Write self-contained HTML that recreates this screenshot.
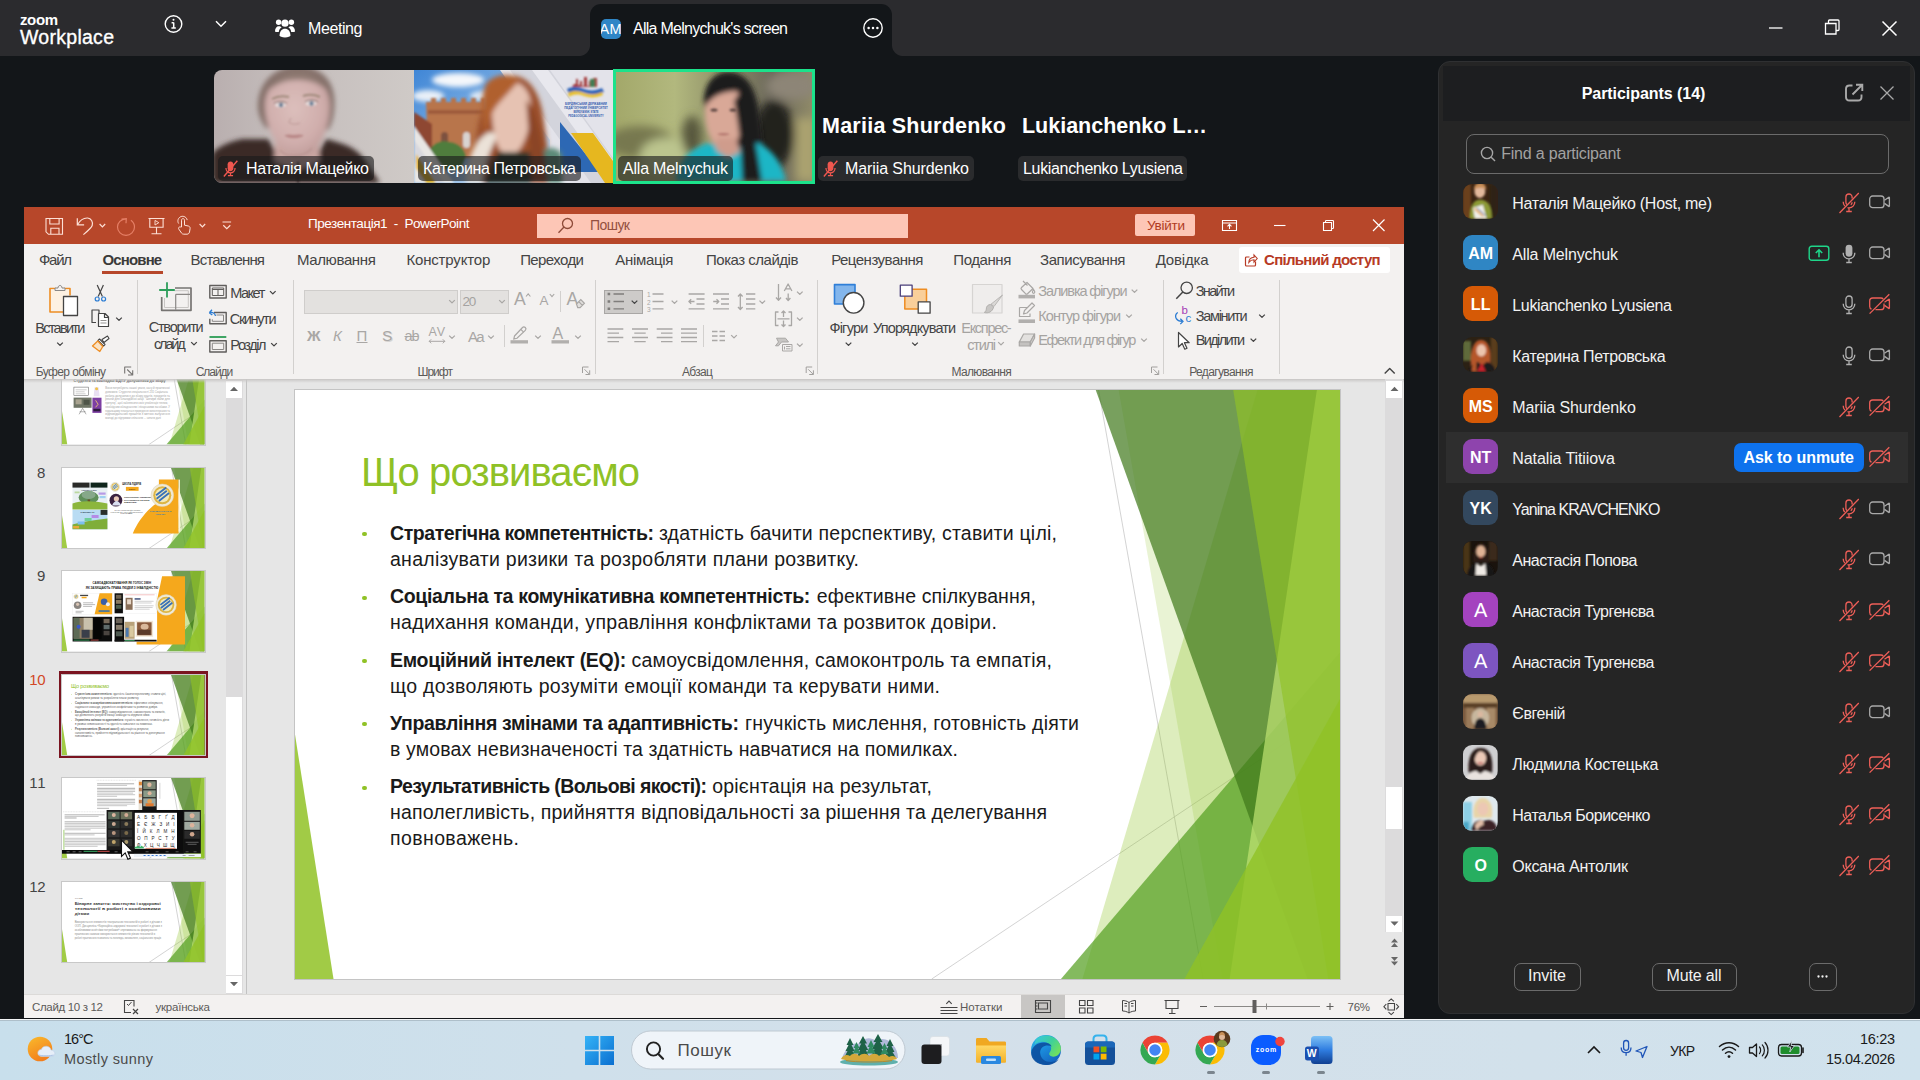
<!DOCTYPE html>
<html lang="uk">
<head>
<meta charset="utf-8">
<title>Zoom Workplace</title>
<style>
*{box-sizing:border-box;margin:0;padding:0}
html,body{width:1920px;height:1080px;overflow:hidden;background:#131619;font-family:"Liberation Sans","DejaVu Sans",sans-serif;}
.abs{position:absolute}
#zbar{position:absolute;left:0;top:0;width:1920px;height:56px;background:#2b2b2e;color:#fff}
#ztab{position:absolute;left:590px;top:4px;width:302px;height:52px;background:#131619;border-radius:11px 11px 0 0}
#ztab:before,#ztab:after{content:"";position:absolute;bottom:0;width:11px;height:11px;background:radial-gradient(circle at 0 0,#2b2b2e 10.5px,#131619 11.5px)}
#ztab:before{left:-11px}
#ztab:after{right:-11px;background:radial-gradient(circle at 100% 0,#2b2b2e 10.5px,#131619 11.5px)}
.t{position:absolute;white-space:pre;line-height:1}
/* video strip */
.tile{position:absolute;top:70px;width:200px;height:113px;overflow:hidden}
.nm{position:absolute;height:25px;border-radius:5px;background:rgba(26,26,28,.62);color:#fff;font-size:16px;line-height:25px;white-space:nowrap;padding:0 6px}
/* ppt */
#ppt{position:absolute;left:24px;top:207px;width:1380px;height:811px;background:#e6e6e6;overflow:hidden}
#ptitle{position:absolute;left:0;top:0;width:1380px;height:37px;background:#b7472a}
#ptabs{position:absolute;left:0;top:37px;width:1380px;height:35px;background:#f3f1f0}
#pribbon{position:absolute;left:0;top:72px;width:1380px;height:101px;background:#f3f1f0;border-bottom:1px solid #d8d6d4}
#pmain{position:absolute;left:0;top:172px;width:1380px;height:615px;overflow:hidden}
#pstatus{position:absolute;left:0;top:787px;width:1380px;height:24px;background:#f3f1f0;border-top:1px solid #dcdad8}
.sl{left:366px;font-size:19.500px;color:#1a1a1a}
/* participants */
#pp{position:absolute;left:1438px;top:61px;width:477px;height:953px;background:#252525;border-radius:12px;border:1px solid #2f3032;overflow:hidden}
#pphead{position:absolute;left:4px;top:4px;width:467px;height:55px;background:#1d1e20}
.row{position:absolute;left:9px;width:459px;height:51px;color:#fff}
.av{position:absolute;left:1463.300px;width:34.700px;height:34.700px;border-radius:9px;overflow:hidden}
.rn{position:absolute;left:65px;top:0;line-height:51px;font-size:16px;color:#f5f5f5;white-space:nowrap}
/* taskbar */
#tb{position:absolute;left:0;top:1020px;width:1920px;height:60px;background:linear-gradient(90deg,#c8dfec 0%,#cfe0eb 30%,#d4e0ea 55%,#d2e1eb 80%,#d0e2ed 100%)}
</style>
</head>
<body>
<!-- ZOOM TITLE BAR -->
<div id="zbar">
  <span class="t" style="letter-spacing:-0.391px;top:11.80px;left:20px;font-size:15px;font-weight:bold">zoom</span>
  <span class="t" style="letter-spacing:0.279px;top:27.99px;left:20px;font-size:19.5px;-webkit-text-stroke:.35px #fff">Workplace</span>
  <svg class="abs" style="left:163px;top:13px" width="22" height="22" viewBox="0 0 22 22" fill="none" stroke="#fff" stroke-width="1.4"><circle cx="10.5" cy="11" r="8.3"/><path d="M10.7 9.6v5.2M8.6 9.7h2.1M8.4 14.9h4.4" stroke-width="1.5"/><circle cx="10.5" cy="6.8" r="1" fill="#fff" stroke="none"/></svg>
  <svg class="abs" style="left:214px;top:19px" width="14" height="10" viewBox="0 0 14 10" fill="none" stroke="#fff" stroke-width="1.5"><path d="M2 2.2l5 5 5-5"/></svg>
  <svg class="abs" style="left:274px;top:17px" width="22" height="22" viewBox="0 0 22 22" fill="#fff"><circle cx="11" cy="6.2" r="3.6"/><circle cx="4.6" cy="5.2" r="2.7"/><circle cx="17.4" cy="5.2" r="2.7"/><path d="M1 14.2c0-3 1.6-5 3.8-5 1.2 0 2.1.5 2.8 1.4-1.6 1-2.6 2.4-2.8 4.4H2c-.6 0-1-.3-1-.8zM21 14.2c0-3-1.6-5-3.8-5-1.2 0-2.1.5-2.8 1.4 1.6 1 2.6 2.4 2.8 4.4H20c.6 0 1-.3 1-.8z"/><path d="M5.6 18.3c0-4 2.3-6.6 5.4-6.6s5.4 2.600 5.400 6.600c0 1.300-2.400 2.200-5.400 2.200s-5.400-.9-5.400-2.200z"/></svg>
  <span class="t" style="letter-spacing:-0.404px;top:20.76px;left:308px;font-size:16px">Meeting</span>
  <div id="ztab">
    <div class="abs" style="left:11px;top:15px;width:20px;height:20px;border-radius:5px;background:#2f86c6;overflow:hidden"><span class="t" style="letter-spacing:0.250px;top:2.93px;left:-1.500px;font-size:14.5px;color:#fff">AM</span></div>
    <span class="t" style="letter-spacing:-0.733px;top:16.76px;left:43px;font-size:16px">Alla Melnychuk's screen</span>
    <svg class="abs" style="left:272px;top:13px" width="22" height="22" viewBox="0 0 22 22" fill="none" stroke="#fff" stroke-width="1.400"><circle cx="11" cy="11" r="9.2"/><g fill="#fff" stroke="none"><circle cx="6.6" cy="11" r="1.25"/><circle cx="11" cy="11" r="1.25"/><circle cx="15.4" cy="11" r="1.25"/></g></svg>
  </div>
  <svg class="abs" style="left:1760px;top:14px" width="150" height="30" viewBox="0 0 150 30" fill="none" stroke="#fff" stroke-width="1.300"><path d="M9 14h13.500"/><path d="M65.500 9.500h10.500v10.500h-10.500zM68.500 9.500v-2.500c0-.6.400-1 1-1h8.500c.6 0 1 .4 1 1v8.500c0 .6-.4 1-1 1h-2.500"/><path d="M122.500 7.500l14 14M136.500 7.500l-14 14" stroke-width="1.500"/></svg>
</div>

<!-- VIDEO STRIP -->
<div id="strip">
<svg width="0" height="0" style="position:absolute"><defs>
  <filter id="b1" x="-20%" y="-20%" width="140%" height="140%"><feGaussianBlur stdDeviation="1.2"/></filter>
  <filter id="b2" x="-20%" y="-20%" width="140%" height="140%"><feGaussianBlur stdDeviation="2.600"/></filter>
  <filter id="b4" x="-30%" y="-30%" width="160%" height="160%"><feGaussianBlur stdDeviation="5"/></filter>
  <symbol id="micoff" viewBox="0 0 20 20"><path d="M10 2.600c-1.700 0-3 1.300-3 3v4.200c0 1.700 1.300 3 3 3s3-1.300 3-3V5.600c0-1.700-1.300-3-3-3z" fill="currentColor"/><path d="M5.200 9.600c0 2.800 2.100 4.900 4.800 4.900s4.800-2.100 4.800-4.900M10 14.600v2.600M7.300 17.400h5.400" fill="none" stroke="currentColor" stroke-width="1.300"/><path d="M17.200 1.800L3 18.400" stroke="currentColor" stroke-width="1.500"/></symbol>
</defs></svg>
<!-- tile 1 -->
<div class="tile" style="left:214px;border-radius:8px 0 0 8px">
<svg width="200" height="113" viewBox="0 0 200 113">
  <defs><linearGradient id="w1" x1="0" x2="1"><stop offset="0" stop-color="#b9afaf"/><stop offset=".3" stop-color="#c3bbba"/><stop offset="1" stop-color="#cfcac7"/></linearGradient>
  <radialGradient id="f1" cx=".45" cy=".4" r=".7"><stop offset="0" stop-color="#dcbfbc"/><stop offset=".6" stop-color="#d0aeac"/><stop offset="1" stop-color="#b99593"/></radialGradient></defs>
  <rect width="200" height="113" fill="url(#w1)"/>
  <g filter="url(#b2)">
    <path d="M44 40C42 14 60-4 84-4s40 16 36 46c-1 8-3 14-6 18L52 58c-4-5-7-11-8-18z" fill="#85716b"/>
    <path d="M-2 113V84c6-8 20-13 30-15l26 0 12 20 36-2 10-18c16 4 30 8 38 20l16 24z" fill="#3a2928"/>
    <path d="M62 66h42l2 26-22 8-24-8z" fill="#cba7a3"/>
    <path d="M51 36c0-18 12-30 33-30 20 0 32 12 32 30 0 16-6 32-13 42-7 10-20 12-29 6C61 76 51 54 51 36z" fill="url(#f1)"/>
    <path d="M56 20c6-12 16-17 28-17s22 5 27 16c-8-7-17-9-28-9s-20 3-27 10z" fill="#8f7a72"/>
  </g>
  <g filter="url(#b1)">
    <path d="M58 29c5-3 11-3.500 17-2M89 26c6-2 12-1.500 17 1" stroke="#a08a7c" stroke-width="2" fill="none"/>
    <ellipse cx="66.500" cy="35" rx="5.500" ry="2.400" fill="#e6dcdc"/><ellipse cx="97" cy="33.500" rx="5.500" ry="2.400" fill="#e6dcdc"/>
    <circle cx="67" cy="35" r="2.300" fill="#6b7f96"/><circle cx="97.500" cy="33.500" r="2.300" fill="#6b7f96"/>
    <path d="M60 33.500c4-2.500 9-2.500 13 0M91 32c4-2.500 9-2.500 13 0" stroke="#7b6660" stroke-width="1" fill="none"/>
    <path d="M77 48c-1 2-1.500 3-2 4.500 2 2 7 2.500 11 .5" stroke="#bd9a97" stroke-width="1.500" fill="none" opacity=".7"/>
    <path d="M71 65.500c3-1.800 6-1 8.500-.5 2.500-.5 6-1.300 9.500.5-3 3.500-14 4-18 0z" fill="#c0908f"/>
    <path d="M71 65.600c6 1.200 12 1.200 18 0" stroke="#a87574" stroke-width=".8" fill="none"/>
    <path d="M66 80c6 8 24 8 32-2" stroke="#b28e8c" stroke-width="2" fill="none" opacity=".6"/>
    <path d="M84 92v21" stroke="#241818" stroke-width="1.500"/>
  </g>
</svg>
<div class="nm" style="left:4px;top:86px;width:156px;padding:0"><svg class="abs" style="left:3px;top:3px;color:#f0574f" width="19" height="19"><use href="#micoff"/></svg><span class="t" style="letter-spacing:-0.318px;top:5.16px;left:28px;font-size:16px">Наталія Мацейко</span></div>
</div>
<!-- tile 2 -->
<div class="tile" style="left:414px;width:199px">
<svg width="199" height="113" viewBox="0 0 199 113">
  <defs><linearGradient id="sky" x1="0" y1="0" x2="1" y2="1"><stop offset="0" stop-color="#3f86d6"/><stop offset=".55" stop-color="#8db9e6"/><stop offset="1" stop-color="#dfe8f2"/></linearGradient></defs>
  <rect width="199" height="113" fill="#e3e3ea"/>
  <path d="M0 0h86l50 70v43H0z" fill="url(#sky)"/>
  <g filter="url(#b2)"><ellipse cx="44" cy="10" rx="26" ry="7" fill="#f4f7fb"/><ellipse cx="14" cy="26" rx="16" ry="6" fill="#e9f0f8"/><ellipse cx="70" cy="26" rx="14" ry="5" fill="#dfeaf6"/></g>
  <g filter="url(#b1)">
    <path d="M12 32h5v-4h5v4h5v-4h5v4h5v-4h5v4h5v-4h5v4h5v-4h5v4h5v-4h4v60H14z" fill="#b8744c"/>
    <path d="M0 42l18 12v30L0 70z" fill="#8e4630"/>
    <path d="M14 40h60v4H14z" fill="#9e5c3c"/>
    <rect x="27" y="62" width="7" height="14" rx="3.500" fill="#7d5140"/><rect x="49" y="62" width="7" height="16" rx="3.500" fill="#d9d3d0"/>
    <path d="M16 80c4-8 12-10 20-8 8 1 14 6 16 14l-6 14H22z" fill="#4f7d3c"/>
    <path d="M0 56l40 57H0z" fill="#e8e6e4"/><path d="M0 70l30 43H14L0 92z" fill="#d8d8de"/>
    <path d="M2 84l20 29H12L2 98z" fill="#e3b629"/>
  </g>
  <path d="M96 0h40l63 88v25h-22z" fill="#d3d4dc"/><path d="M118 0h16l65 90v22z" fill="#e8e8ee"/>
  <path d="M146 52l40 50h-40z" fill="#2d68b4"/><path d="M157 63h22l20 28v22h-8z" fill="#e6b71f"/>
  <g filter="url(#b2)">
    <path d="M60 113c-2-30 4-70 14-88C80 10 92 4 102 6c12 2 22 14 26 34 4 22 6 50 12 73z" fill="#9b4f2a"/>
    <path d="M78 40c0-18 8-28 20-28s20 12 19 30c-1 16-6 30-12 38-5 6-14 6-19 0-5-8-8-24-8-40z" fill="#e6c2b2"/>
    <path d="M72 14c8-10 24-12 34-4l-20 22c-8 8-12 20-14 34-4-18-6-38 0-52z" fill="#b0602f"/>
    <path d="M52 106c2-16 8-34 20-42 4-3 10-2 10 4-4 10-12 24-14 45H52z" fill="#ebe2d8"/>
    <path d="M84 82h46l10 31H70z" fill="#27352c"/>
    <path d="M130 80c6-4 14-2 18 4v29h-14z" fill="#5c8a78"/>
    <path d="M112 30c10 10 16 40 22 83h-16c-2-30-4-60-6-83z" fill="#8b4525"/>
  </g>
  <g filter="url(#b1)"><path d="M160 14h2v-5h2v6h2v-4h2v5h2v-9h3v9h2v-5h2v5h2v-8h4v9h-25z" fill="#a33a3a"/><path d="M176 9h5v8h-5z" fill="#3f7d52"/><path d="M153 19c6-3 12-2 17 0s12 2 18-1l2 4c-7 3-13 3-19 1s-11-2-16 1z" fill="#2b62b8"/><path d="M154 23c6-3 11-2 16 0s12 2 18-1l1 3c-7 3-13 3-19 1s-10-2-15 1z" fill="#e8c02a"/></g>
  <g font-family="Liberation Sans,sans-serif" font-size="2.900" font-weight="bold" fill="#3560b0" text-anchor="middle"><text x="172" y="34.500">БЕРДЯНСЬКИЙ ДЕРЖАВНИЙ</text><text x="172" y="38.800">ПЕДАГОГІЧНИЙ УНІВЕРСИТЕТ</text><text x="172" y="43.100" font-size="2.600">BERDYANSK STATE</text><text x="172" y="47.400" font-size="2.600">PEDAGOGICAL UNIVERSITY</text></g>
</svg>
<div class="nm" style="left:4px;top:86px;width:163px;padding:0"><span class="t" style="letter-spacing:-0.379px;top:5.16px;left:5px;font-size:16px">Катерина Петровська</span></div>
</div>
<!-- tile 3 -->
<div class="tile" style="left:613px;top:69px;width:202px;height:115px;background:#1ce28b">
<svg class="abs" style="left:3px;top:3px" width="196" height="109" viewBox="0 0 196 109">
  <defs><linearGradient id="g3" x1="0" x2="1"><stop offset="0" stop-color="#a3a86a"/><stop offset=".3" stop-color="#b2b87e"/><stop offset=".55" stop-color="#8f9068"/><stop offset=".8" stop-color="#6b675a"/><stop offset="1" stop-color="#8f8a68"/></linearGradient></defs>
  <rect width="196" height="109" fill="url(#g3)"/>
  <g filter="url(#b4)">
    <ellipse cx="24" cy="70" rx="34" ry="16" fill="#77784f"/><ellipse cx="50" cy="84" rx="26" ry="18" fill="#bcc58e"/>
    <ellipse cx="158" cy="62" rx="20" ry="34" fill="#24221d"/><ellipse cx="176" cy="14" rx="26" ry="14" fill="#8d8577"/>
    <rect x="180" y="46" width="20" height="63" fill="#aaa270"/><ellipse cx="76" cy="64" rx="10" ry="20" fill="#58583e"/>
  </g>
  <g filter="url(#b2)">
    <path d="M88 30c0-18 10-30 24-30 16 0 26 12 30 34 4 24 6 52 8 75h-30c-2-20-6-40-12-52-10-2-20-12-20-27z" fill="#1f1a1d"/>
    <path d="M60 109c2-18 12-32 32-38l22 6 28-6c14 6 24 20 28 38z" fill="#1fb6c6"/>
    <path d="M89 40c0-16 8-26 20-26 10 0 18 8 18 24 0 14-2 26-8 34-6 7-16 7-21 0-6-8-9-20-9-32z" fill="#d9a897"/>
    <path d="M100 66h20l4 14-12 6-12-8z" fill="#cf9c8c"/>
    <path d="M124 20c10 14 16 50 22 89h-20c0-30-4-60-8-80z" fill="#1f1a1d"/>
    <path d="M89 34c2-14 10-22 22-22 6 0 12 2 16 8-10-2-22 0-30 6-4 3-6 6-8 8z" fill="#1f1a1d"/>
  </g>
  <g filter="url(#b1)"><path d="M101 62c4-1.500 9-1.500 13 0-4 2-9 2-13 0z" fill="#b57870"/><ellipse cx="98" cy="38" rx="3.500" ry="1.500" fill="#5a4540"/><ellipse cx="117" cy="38" rx="3.500" ry="1.500" fill="#5a4540"/></g>
</svg>
<div class="nm" style="left:5px;top:87px;width:115px;padding:0"><span class="t" style="letter-spacing:-0.201px;top:5.16px;left:5px;font-size:16px">Alla Melnychuk</span></div>
</div>
<!-- text tiles -->
<span class="t" style="letter-spacing:0.240px;top:115.80px;left:822px;font-size:21.500px;font-weight:bold;color:#fff">Mariia Shurdenko</span>
<div class="nm" style="left:818px;top:156px;width:156px;padding:0;background:#2a2b2d"><svg class="abs" style="left:3px;top:3px;color:#f0574f" width="19" height="19"><use href="#micoff"/></svg><span class="t" style="letter-spacing:-0.094px;top:5.16px;left:27px;font-size:16px">Mariia Shurdenko</span></div>
<span class="t" style="letter-spacing:-0.012px;top:115.80px;left:1022px;font-size:21.500px;font-weight:bold;color:#fff">Lukianchenko L…</span>
<div class="nm" style="left:1018px;top:156px;width:169px;padding:0;background:#2a2b2d"><span class="t" style="letter-spacing:-0.332px;top:5.16px;left:5px;font-size:16px">Lukianchenko Lyusiena</span></div>
</div>

<!-- POWERPOINT WINDOW -->
<div id="ppt">
  <div id="ptitle">
  <svg class="abs" style="left:0;top:0" width="260" height="37" viewBox="24 207 260 37" fill="none" stroke="#fde0d6" stroke-width="1.100">
    <!-- save -->
    <path d="M46 218.500h16.500v15.800H48.500L46 231.800zM49.800 218.500v5.500h9.300v-5.500M50.800 234.300v-6h8.200v6"/>
    <!-- undo -->
    <path d="M77.300 218.200v6.600h6.800M77.600 224.500c2.500-4.300 6.400-6.700 10-6.500 3.600.3 5.600 4 4.600 7.500-.6 2-2.600 4-8.800 9.100" stroke-width="1.200"/>
    <path d="M99.600 224l2.800 2.800 2.800-2.800" stroke-width="1.200"/>
    <!-- redo dim -->
    <g stroke="#e57f66"><path d="M121.500 219l4.800-.3-.3 4.500M126 218.800c-5 .3-8.500 3.800-8.500 8.200 0 4.600 3.800 8.300 8.500 8.300s8.500-3.700 8.500-8.300c0-2.800-1.400-5.300-3.600-6.800" stroke-width="1.200"/></g>
    <!-- presentation -->
    <path d="M148.500 218.500h16M149.800 218.500v8.700h13.300v-8.700M156.500 227.200v6.500M151.500 233.800h10"/><path d="M155 220.400v4.600l3.800-2.300z" stroke-width=".9"/>
    <!-- touch -->
    <path d="M181.500 227v-6.800c0-1 .7-1.600 1.500-1.600s1.500.6 1.500 1.600v5l3.800.8c1.300.3 2 1.300 1.800 2.600l-.6 3.400c-.2 1.300-1.200 2.200-2.500 2.200h-3.200c-1 0-1.900-.5-2.400-1.300l-2.600-3.800c-.5-.8-.3-1.600.4-2 .7-.3 1.500 0 2.300-.1zM178.600 223.500c-1.600-2.600-.4-6 2.600-7 2.600-.8 5.500.8 6 3.600" stroke-width="1"/>
    <path d="M199.600 224l2.800 2.800 2.800-2.800" stroke-width="1.200"/>
    <!-- qat -->
    <path d="M222.500 222h8.600M223.300 225.300l3.500 3.400 3.500-3.400" stroke-width="1.200"/>
  </svg>
  <span class="t" style="letter-spacing:-0.445px;top:10.17px;left:284px;font-size:13.500px;color:#fff">Презентація1  -  PowerPoint</span>
  <div class="abs" style="left:513px;top:7px;width:371px;height:23.500px;background:#fdc6b6"></div>
  <svg class="abs" style="left:532px;top:9px" width="20" height="20" viewBox="0 0 20 20" fill="none" stroke="#8e4a38" stroke-width="1.300"><circle cx="11.500" cy="7.500" r="5"/><path d="M8 11l-5.500 5.800"/></svg>
  <span class="t" style="letter-spacing:-0.555px;top:11.35px;left:566px;font-size:14px;color:#94503f">Пошук</span>
  <div class="abs" style="left:1111px;top:7px;width:60px;height:22px;background:#fdc6b6;border-radius:2px"></div>
  <span class="t" style="letter-spacing:-0.253px;top:11.57px;left:1123px;font-size:13.500px;color:#b03a22">Увійти</span>
  <svg class="abs" style="left:1191px;top:0" width="189" height="37" viewBox="1215 207 189 37" fill="none" stroke="#fff" stroke-width="1.100">
    <path d="M1222.500 220.500h14v10h-14zM1222.500 223h14"/><path d="M1229.500 229v-4.500M1227.500 226.300l2-2 2 2"/>
    <path d="M1274 225.500h11.500"/>
    <path d="M1323.500 222.500h8v8h-8zM1325.500 222.500v-1.200c0-.5.400-.8.800-.8h6.400c.5 0 .8.400.8.800v6.400c0 .5-.4.800-.8.800h-1.200"/>
    <path d="M1373 219.500l11.500 11.500M1384.500 219.500l-11.500 11.500" stroke-width="1.200"/>
  </svg>
</div>
  <div id="ptabs">
  <span class="t" style="letter-spacing:-1.297px;top:8.20px;left:15.0px;font-size:15px;color:#444;">Файл</span>
  <span class="t" style="letter-spacing:-0.860px;top:8.20px;left:78.5px;font-size:15px;color:#444;font-weight:bold;color:#3b3a39;">Основне</span>
  <span class="t" style="letter-spacing:-0.841px;top:8.20px;left:166.6px;font-size:15px;color:#444;">Вставлення</span>
  <span class="t" style="letter-spacing:-0.380px;top:8.20px;left:273.0px;font-size:15px;color:#444;">Малювання</span>
  <span class="t" style="letter-spacing:-0.163px;top:8.20px;left:382.4px;font-size:15px;color:#444;">Конструктор</span>
  <span class="t" style="letter-spacing:-0.596px;top:8.20px;left:496.2px;font-size:15px;color:#444;">Переходи</span>
  <span class="t" style="letter-spacing:-0.333px;top:8.20px;left:591.3px;font-size:15px;color:#444;">Анімація</span>
  <span class="t" style="letter-spacing:-0.489px;top:8.20px;left:682.0px;font-size:15px;color:#444;">Показ слайдів</span>
  <span class="t" style="letter-spacing:-0.507px;top:8.20px;left:807.2px;font-size:15px;color:#444;">Рецензування</span>
  <span class="t" style="letter-spacing:-0.432px;top:8.20px;left:929.3px;font-size:15px;color:#444;">Подання</span>
  <span class="t" style="letter-spacing:-0.435px;top:8.20px;left:1016.0px;font-size:15px;color:#444;">Записування</span>
  <span class="t" style="letter-spacing:-0.195px;top:8.20px;left:1131.7px;font-size:15px;color:#444;">Довідка</span>
  <div class="abs" style="left:78px;top:27px;width:61px;height:2.500px;background:#b7472a"></div>
  <div class="abs" style="left:1214.5px;top:2.5px;width:151.500px;height:26px;background:#fff;border-radius:3px"></div>
  <svg class="abs" style="left:1219px;top:8px" width="16" height="16" viewBox="0 0 16 16" fill="none" stroke="#b73a25" stroke-width="1.200"><path d="M6.500 5H3.500c-.6 0-1 .4-1 1v7c0 .6.400 1 1 1h8c.6 0 1-.4 1-1v-3.500"/><path d="M5.800 10.500c.2-3 2.200-5 5.200-5.200V3l3.200 3.500-3.200 3.500V7.800c-2.200 0-3.800.8-5.200 2.700z" stroke-width="1.100"/></svg>
  <span class="t" style="letter-spacing:-0.703px;top:8.20px;left:1240px;font-size:15px;font-weight:bold;color:#b73a25">Спільний доступ</span>
</div>
  <div id="pribbon">
  <div class="abs" style="left:279.5px;top:10.5px;width:154px;height:24px;background:#e3e1df;border:1px solid #cfcdcb"></div>
  <div class="abs" style="left:435.5px;top:10.5px;width:49px;height:24px;background:#e3e1df;border:1px solid #cfcdcb"></div>
  <div class="abs" style="left:580px;top:10.5px;width:39px;height:24.500px;background:#cdcbc9;border:1px solid #a9a7a5"></div>
  <span class="t" style="letter-spacing:-1.717px;top:42.23px;left:11.3px;font-size:14.5px;color:#444">Вставити</span>
  <span class="t" style="letter-spacing:-0.596px;top:86.64px;left:11.7px;font-size:12px;color:#5c5a58">Буфер обміну</span>
  <span class="t" style="letter-spacing:-1.232px;top:41.43px;left:124.7px;font-size:14.5px;color:#444">Створити</span>
  <span class="t" style="letter-spacing:-2.161px;top:58.43px;left:130.0px;font-size:14.5px;color:#444">слайд</span>
  <span class="t" style="letter-spacing:-1.512px;top:7.23px;left:206.3px;font-size:14.5px;color:#444">Макет</span>
  <span class="t" style="letter-spacing:-1.370px;top:33.43px;left:205.8px;font-size:14.5px;color:#444">Скинути</span>
  <span class="t" style="letter-spacing:-1.444px;top:58.93px;left:206.3px;font-size:14.5px;color:#444">Розділ</span>
  <span class="t" style="letter-spacing:-1.050px;top:86.64px;left:171.7px;font-size:12px;color:#5c5a58">Слайди</span>
  <span class="t" style="letter-spacing:-1.031px;top:15.87px;left:438.4px;font-size:13.5px;color:#a5a3a1">20</span>
  <span class="t" style="letter-spacing:-0.971px;top:86.64px;left:393.4px;font-size:12px;color:#5c5a58">Шрифт</span>
  <span class="t" style="letter-spacing:-0.668px;top:86.64px;left:658.0px;font-size:12px;color:#5c5a58">Абзац</span>
  <span class="t" style="letter-spacing:-0.759px;top:41.73px;left:805.4px;font-size:14.5px;color:#444">Фігури</span>
  <span class="t" style="letter-spacing:-0.844px;top:41.73px;left:849.0px;font-size:14.5px;color:#444">Упорядкувати</span>
  <span class="t" style="letter-spacing:-1.300px;top:41.73px;left:937.3px;font-size:14.5px;color:#a5a3a1">Експрес-</span>
  <span class="t" style="letter-spacing:-1.222px;top:58.73px;left:943.2px;font-size:14.5px;color:#a5a3a1">стилі</span>
  <span class="t" style="letter-spacing:-1.096px;top:5.23px;left:1014.3px;font-size:14.5px;color:#a5a3a1">Заливка фігури</span>
  <span class="t" style="letter-spacing:-0.959px;top:30.03px;left:1014.3px;font-size:14.5px;color:#a5a3a1">Контур фігури</span>
  <span class="t" style="letter-spacing:-1.423px;top:54.13px;left:1014.3px;font-size:14.5px;color:#a5a3a1">Ефекти для фігур</span>
  <span class="t" style="letter-spacing:-0.661px;top:86.64px;left:927.5px;font-size:12px;color:#5c5a58">Малювання</span>
  <span class="t" style="letter-spacing:-1.694px;top:5.23px;left:1171.8px;font-size:14.5px;color:#444">Знайти</span>
  <span class="t" style="letter-spacing:-1.311px;top:30.03px;left:1171.8px;font-size:14.5px;color:#444">Замінити</span>
  <span class="t" style="letter-spacing:-1.652px;top:54.13px;left:1171.8px;font-size:14.5px;color:#444">Виділити</span>
  <span class="t" style="letter-spacing:-0.641px;top:86.64px;left:1165.2px;font-size:12px;color:#5c5a58">Редагування</span>
  <div class="abs" style="left:113.2px;top:1px;width:1px;height:94px;background:#d2d0ce"></div>
  <div class="abs" style="left:269.0px;top:1px;width:1px;height:94px;background:#d2d0ce"></div>
  <div class="abs" style="left:570.8px;top:1px;width:1px;height:94px;background:#d2d0ce"></div>
  <div class="abs" style="left:793.2px;top:1px;width:1px;height:94px;background:#d2d0ce"></div>
  <div class="abs" style="left:1139.2px;top:1px;width:1px;height:94px;background:#d2d0ce"></div>
  <div class="abs" style="left:1255.1px;top:1px;width:1px;height:94px;background:#d2d0ce"></div>
  <div class="abs" style="left:536.1px;top:12px;width:1px;height:21px;background:#d2d0ce"></div>
  <div class="abs" style="left:480.4px;top:46px;width:1px;height:22px;background:#d2d0ce"></div>
  <div class="abs" style="left:679.2px;top:46px;width:1px;height:22px;background:#d2d0ce"></div>
<svg class="abs" style="left:0;top:0" width="1380" height="101" viewBox="24 279 1380 101" fill="none" stroke-linejoin="round">
<path d="M57.2 342.6l2.800 2.800 2.800-2.800" stroke="#444" stroke-width="1.300"/><path d="M116.2 317.6l2.800 2.800 2.800-2.800" stroke="#444" stroke-width="1.300"/><path d="M191.2 342.1l2.800 2.800 2.800-2.800" stroke="#444" stroke-width="1.300"/><path d="M270.0 291.1l2.800 2.800 2.800-2.800" stroke="#444" stroke-width="1.300"/><path d="M271.2 343.1l2.800 2.800 2.800-2.800" stroke="#444" stroke-width="1.300"/><path d="M631.7 300.6l2.800 2.800 2.800-2.800" stroke="#444" stroke-width="1.300"/><path d="M845.7 342.6l2.800 2.800 2.800-2.800" stroke="#444" stroke-width="1.300"/><path d="M912.2 342.6l2.800 2.800 2.800-2.800" stroke="#444" stroke-width="1.300"/><path d="M1259.2 314.6l2.800 2.800 2.800-2.800" stroke="#444" stroke-width="1.300"/><path d="M1250.6 338.6l2.800 2.800 2.800-2.800" stroke="#444" stroke-width="1.300"/>
<path d="M449.2 300.1l2.800 2.800 2.800-2.800" stroke="#a9a7a5" stroke-width="1.300"/><path d="M499.2 300.1l2.800 2.800 2.800-2.800" stroke="#a9a7a5" stroke-width="1.300"/><path d="M671.7 300.6l2.800 2.800 2.800-2.800" stroke="#a9a7a5" stroke-width="1.300"/><path d="M759.5 300.6l2.800 2.800 2.800-2.800" stroke="#a9a7a5" stroke-width="1.300"/><path d="M797.0 291.6l2.800 2.800 2.800-2.800" stroke="#a9a7a5" stroke-width="1.300"/><path d="M797.0 317.6l2.800 2.800 2.800-2.800" stroke="#a9a7a5" stroke-width="1.300"/><path d="M797.0 343.6l2.800 2.800 2.800-2.800" stroke="#a9a7a5" stroke-width="1.300"/><path d="M731.2 335.1l2.800 2.800 2.800-2.800" stroke="#a9a7a5" stroke-width="1.300"/><path d="M449.2 335.6l2.800 2.800 2.800-2.800" stroke="#a9a7a5" stroke-width="1.300"/><path d="M488.2 335.6l2.800 2.800 2.800-2.800" stroke="#a9a7a5" stroke-width="1.300"/><path d="M535.2 335.6l2.800 2.800 2.800-2.800" stroke="#a9a7a5" stroke-width="1.300"/><path d="M575.2 335.6l2.800 2.800 2.800-2.800" stroke="#a9a7a5" stroke-width="1.300"/><path d="M998.2 342.1l2.800 2.800 2.800-2.800" stroke="#a9a7a5" stroke-width="1.300"/><path d="M1131.7 289.6l2.800 2.800 2.800-2.800" stroke="#a9a7a5" stroke-width="1.300"/><path d="M1126.2 314.6l2.800 2.800 2.800-2.800" stroke="#a9a7a5" stroke-width="1.300"/><path d="M1141.2 338.6l2.800 2.800 2.800-2.800" stroke="#a9a7a5" stroke-width="1.300"/>

<path d="M124.69999999999999 373.500v-6.500h6.500M127.19999999999999 369.500l5.200 5.200M132.7 370.300v4.700h-4.700" stroke="#767472" stroke-width="1.100"/><path d="M582.5 373v-6h6M584.5 369.300l5 5M589.7 370.300v4.200h-4.200" stroke="#a19f9d" stroke-width="1"/><path d="M806.2 373v-6h6M808.2 369.300l5 5M813.4000000000001 370.300v4.200h-4.200" stroke="#a19f9d" stroke-width="1"/><path d="M1151.5 373v-6h6M1153.5 369.300l5 5M1158.7 370.300v4.200h-4.200" stroke="#a19f9d" stroke-width="1"/>
<!-- paste -->
<path d="M56 288.500h-6v23.500h13" stroke="#ee8d22" stroke-width="1.600"/><path d="M64 288.500h6v7" stroke="#ee8d22" stroke-width="1.600"/><path d="M51 289.500h18v21h-18z" fill="#fdf1e2" stroke="none"/>
<path d="M55 290.500v-2.500h3c0-1.500.8-2.500 2-2.500s2 1 2 2.500h3v2.500z" fill="#f3f1f0" stroke="#8a8886" stroke-width="1"/>
<path d="M63.500 296.500h14v19h-14z" fill="#fff" stroke="#444" stroke-width="1.300"/>
<!-- cut -->
<path d="M97.200 285l5.200 11.500M103.400 285l-5.200 11.500" stroke="#444" stroke-width="1.200"/><circle cx="97.200" cy="299" r="2" stroke="#2b7cd3" stroke-width="1.200"/><circle cx="103.600" cy="299" r="2" stroke="#2b7cd3" stroke-width="1.200"/>
<!-- copy -->
<path d="M96 322.500h-4v-12.500h7v3" stroke="#444" stroke-width="1.200"/><path d="M98.500 313.500h6.500l3.500 3.500v9.500h-10zM104.500 313.500v4h4" fill="#fff" stroke="#444" stroke-width="1.200"/><path d="M100.500 320.500h6M100.500 323h6" stroke="#8a8886" stroke-width=".9"/>
<!-- painter -->
<path d="M102 339.500l5.500-3.500 1.500 2.500-5 4z" fill="#fff" stroke="#444" stroke-width="1.100"/><path d="M99.500 339l5.500 5.500-1.500 1.500-5.500-5.500z" fill="#fff" stroke="#444" stroke-width="1.100"/><path d="M97.800 341l5 5.500-3 5-7.300-5.500z" fill="#fbe3c4" stroke="#ee8d22" stroke-width="1.300"/>
<!-- new slide -->
<path d="M161.700 297v13.300h29.300v-22.300h-16" stroke="#767472" stroke-width="1.700"/><path d="M164.500 298v9.500h23.800v-16.800h-13.800" stroke="#c8c6c4" stroke-width="1"/><path d="M175.700 294.300h15M175.700 294.300v15.500" stroke="#8a8886" stroke-width="1.200"/><path d="M167 282.200v15.300M159.200 290h15.600" stroke="#2e9e5b" stroke-width="1.800"/>
<!-- maket -->
<path d="M209.800 285.500h16.400v12.500h-16.400z" stroke="#605e5c" stroke-width="1.400"/><path d="M212.300 289.500h11.400M218 289.500v6M212.300 288v7.500h11.400v-7.500z" stroke="#605e5c" stroke-width="1"/>
<!-- reset -->
<path d="M214 312.500h12.200v11.300h-16.400v-5" stroke="#605e5c" stroke-width="1.400"/><path d="M216.500 315h7v6.300h-11.200v-2" stroke="#8a8886" stroke-width="1"/><path d="M209.300 312.700l2.700-2.900M209.300 312.700l3 2.300M209.700 312.700c3-.8 5.300.6 5.800 3.300" stroke="#2b7cd3" stroke-width="1.300"/>
<!-- section -->
<path d="M209.500 337h16.800" stroke="#3fa564" stroke-width="2"/><path d="M209.800 340.700h16.400v11.300h-16.400z" stroke="#605e5c" stroke-width="1.400"/><path d="M212.300 343.200h11.400v6.300h-11.400z" stroke="#8a8886" stroke-width="1"/>
<!-- paragraph: bullets (active) -->
<g stroke="#7f7d7b" stroke-width="1.300"><path d="M613.500 294h10.500M613.500 301.500h10.500M613.500 308.800h10.500"/><path d="M607.600 294h2.600M607.600 301.500h2.600M607.600 308.800h2.600" stroke-width="2.400"/></g>
<g stroke="#a9a7a5" stroke-width="1.300">
<path d="M652.500 294h11M652.500 301.500h11M652.500 308.800h11"/>
<path d="M688.600 294h16M696.500 299h8M696.500 304h8M688.600 308.800h16M689 301.500h5.500M691.200 299.200l-2.300 2.300 2.300 2.300"/>
<path d="M713 294h16M721 299h8M721 304h8M713 308.800h16M713.200 301.500h5.500M716.500 299.200l2.300 2.300-2.300 2.300"/>
<path d="M746 294h9.300M746 299h9.300M746 304h9.300M746 308.800h9.300M740.300 294v15.500M738 296.500l2.300-2.500 2.300 2.500M738 307l2.300 2.500 2.300-2.500"/>
<path d="M778.500 284v16M776 297.500l2.500 2.800 2.500-2.800M788.200 293.500v7M786 298l2.200 2.500 2.200-2.500M784.300 291l3.800-7 3.800 7M785.700 288.800h4.800"/>
<path d="M778.500 312h-3v13.500h3M788.500 312h3v13.500h-3M777.500 318.800h12M783.500 311v6M781.500 313l2-2 2 2M783.500 326.500v-6M781.500 324.500l2 2 2-2"/>
<path d="M776.500 338.200h9l3 3.800h-7l-3 3.800h-3l3-3.800z" fill="#c8c6c4" stroke-width="1"/><path d="M782.500 344.500h9.500v6.500h-9.500zM784.500 346.500v3M786 346.500h4.500M786 348.800h4.500" stroke-width="1"/>
<path d="M607.500 329h15.800M607.500 333.200h11.500M607.500 337.500h15.800M607.500 341.700h11.500"/>
<path d="M632 329h16M634.300 333.200h11.400M632 337.500h16M634.300 341.700h11.400"/>
<path d="M656.700 329h15.800M661 333.200h11.500M656.700 337.500h15.800M661 341.700h11.500"/>
<path d="M681 329h16M681 333.200h16M681 337.500h16M681 341.700h16"/>
<path d="M712 331.500h5.500M712 336h5.500M712 340.500h5.500M719.500 331.500h5.500M719.500 336h5.500M719.500 340.500h5.500"/>
</g>
<!-- shapes -->
<path d="M834.500 284.600h20.500v19.400h-20.500z" fill="#83b6ec" stroke="#2f7fd8" stroke-width="1.600"/><circle cx="853.600" cy="302.800" r="10.300" fill="#fff" stroke="#444" stroke-width="1.400"/>
<!-- arrange -->
<path d="M904.800 289.300h21.700v19.700h-21.700z" fill="#f9cf9a" stroke="#ee8d22" stroke-width="1.500"/><path d="M900.300 285.200h11.800v11h-11.800z" fill="#fff" stroke="#4a3f7a" stroke-width="1.300"/><path d="M918.200 301.900h11.900v11.300h-11.900z" fill="#fff" stroke="#444" stroke-width="1.300"/>
<!-- express styles disabled -->
<path d="M972.500 284.500h29.500v28.500h-29.500z" fill="#efedec" stroke="#d6d4d2" stroke-width="1.200"/><path d="M1002.500 295l-8.500 11.500-3-2.300z" fill="#dad8d6" stroke="#bab8b6" stroke-width="1"/><path d="M990.600 304.500c-2.500 0-4.500 2-4.300 4.600 0 1.500-.8 2.700-2 3.300 3.800 1.200 8.300-.5 9.300-5.500z" fill="#c8c6c4" stroke="#b3b1af" stroke-width="1"/>
<!-- fill/outline/effects (disabled) -->
<g stroke="#a9a7a5" stroke-width="1.200"><path d="M1018.500 294.800h16.500v3.600h-16.500z" fill="#b1afad" stroke="none"/><path d="M1021.500 287.500l5.500-5 6 6-5.500 5.200c-.6.500-1.400.5-2 0l-4-4.200c-.6-.6-.5-1.500 0-2zM1023 281l4.500 4.500M1033.600 289.500c.8 1.200 1.200 2 1.200 2.600 0 .7-.5 1.200-1.200 1.200s-1.200-.5-1.200-1.200c0-.6.400-1.400 1.200-2.600z"/>
<path d="M1018.500 319.400h16.500v3.600h-16.500z" fill="#b1afad" stroke="none"/><path d="M1019.500 307.500h8M1019.500 307.500v9h10.500v-3M1023.500 314l1-3.500 7.500-7.500 2.500 2.500-7.500 7.500z"/>
<path d="M1019.300 342l4.300-8h11l-4.300 8z" fill="#e3e1df"/><path d="M1019.300 342h11v4h-11z" fill="#c4c2c0"/><path d="M1030.300 346l4.300-8v-4l-4.300 8z" fill="#d2d0ce"/></g>
<!-- find -->
<circle cx="1186.700" cy="287.800" r="5.700" stroke="#444" stroke-width="1.300"/><path d="M1182.800 292l-6.500 6.800" stroke="#444" stroke-width="1.500"/>
<!-- replace -->
<path d="M1177.800 312.500c-2.300 1.300-2.800 4-1.500 6.200 1 1.700 2.800 2.600 5.700 2.700M1180.300 318.700l2.800 2.700-2.800 2.700" stroke="#2b7cd3" stroke-width="1.300"/>
<!-- select -->
<path d="M1178.500 332.500v14.500l3.700-3.500 2.600 5.700 2.200-1-2.600-5.500h4.800z" fill="#fff" stroke="#444" stroke-width="1.200"/>
<!-- collapse -->
<path d="M1384.700 373.500l5-5 5 5" stroke="#444" stroke-width="1.400"/>
</svg>
  <span class="t" style="letter-spacing:-0.350px;top:11.60px;left:490.0px;font-size:17.6px;color:#a9a7a5;">A</span>
    <span class="t" style="letter-spacing:0.562px;top:15.16px;left:515.6px;font-size:13.4px;color:#a9a7a5;">A</span>
    <span class="t" style="top:11.60px;left:542.6px;font-size:17.6px;color:#a9a7a5;">A</span>
  <span class="t" style="letter-spacing:1.438px;top:48.90px;left:283.0px;font-size:15px;color:#a9a7a5;font-weight:bold">Ж</span>
  <span class="t" style="letter-spacing:1.156px;top:48.90px;left:309.0px;font-size:15px;color:#a9a7a5;font-style:italic">К</span>
  <span class="t" style="letter-spacing:0.219px;top:48.60px;left:332.5px;font-size:15px;color:#a9a7a5;text-decoration:underline">П</span>
  <span class="t" style="letter-spacing:-1.344px;top:48.88px;left:358.0px;font-size:15.5px;color:#a9a7a5;text-shadow:1px 1px 0 #d6d4d2">S</span>
  <span class="t" style="letter-spacing:-1.141px;top:49.73px;left:380.5px;font-size:14.5px;color:#a9a7a5;text-decoration:line-through">ab</span>
  <span class="t" style="letter-spacing:0.750px;top:46.92px;left:404.5px;font-size:12.5px;color:#a9a7a5;">AV</span>
  <span class="t" style="letter-spacing:-1.859px;top:49.50px;left:444.0px;font-size:15px;color:#a9a7a5;">Aa</span>
  <span class="t" style="top:47.06px;left:528.5px;font-size:16px;color:#a9a7a5;">A</span>
  <span class="t" style="top:13.00px;left:623.0px;font-size:6.5px;color:#a9a7a5;">1</span>
  <span class="t" style="top:20.50px;left:623.0px;font-size:6.5px;color:#a9a7a5;">2</span>
  <span class="t" style="top:27.80px;left:623.0px;font-size:6.5px;color:#a9a7a5;">3</span>
  <span class="t" style="top:26.07px;left:1157.6px;font-size:11.500px;color:#a23bb5;">b</span>
  <span class="t" style="top:34.27px;left:1161.6px;font-size:11.500px;color:#2b7cd3;">c</span>
  <svg class="abs" style="left:0;top:0" width="1380" height="101" viewBox="24 279 1380 101" fill="none" stroke="#a9a7a5" stroke-width="1.200"><path d="M576.500 304l4.300-4.300 3.600 3.600-4.300 4.300h-2.400zM578.800 301.700l3.600 3.600" fill="#e1dfdd"/><path d="M526 296.500l2.200-2.600 2.200 2.600M549.800 294l2.200 2.600 2.200-2.600" stroke-width="1.100"/><path d="M429 341.300h16M431.200 339.300l-2 2 2 2M442.800 339.300l2 2-2 2" stroke-width="1"/><path d="M510.500 340.200h17.500v3.300h-17.500z" fill="#b1afad" stroke="none"/><path d="M514.500 336l8-8.500c.8-.8 2-.8 2.800 0s.8 2 0 2.800l-8.300 8-3.200.7z"/><path d="M520.800 329.300l2.800 2.800"/><path d="M551.500 340.200h17.500v3.300h-17.500z" fill="#b1afad" stroke="none"/></svg>
</div>
  <div id="pmain"><div class="abs" style="left:0;top:-172px;width:1380px;height:811px">
  <svg width="0" height="0" style="position:absolute"><defs><symbol id="facet" viewBox="0 0 1045 588" preserveAspectRatio="none">
<rect width="1045" height="588" fill="#fff"/>
<path d="M803.200 0L907.700 588M1044.700 315.500L636.400 588" stroke="#c4c4c4" stroke-width=".75" fill="none" vector-effect="non-scaling-stroke"/>
<polygon points="962.2,-0.7 1045,-0.7 1045,588 787.0,588" fill="#90C226" fill-opacity="0.3"/>
<polygon points="823.1,-0.7 1045.0,-0.7 1045.0,588 926.8,588" fill="#90C226" fill-opacity="0.2"/>
<polygon points="1045.0,261.2 1045.0,588 765.6,588" fill="#54A021" fill-opacity="0.72"/>
<polygon points="800.1,-0.7 1045,-0.7 1045,588 1012.0,588" fill="#3F7819" fill-opacity="0.7"/>
<polygon points="1021.5,-0.7 1045,-0.7 1045,588 934.2,588" fill="#C0E474" fill-opacity="0.7"/>
<polygon points="937.6,-0.7 1045,-0.7 1045,588 1032.7,588" fill="#90C226" fill-opacity="0.65"/>
<polygon points="1045,307.7 1045,588 889.0,588" fill="#90C226" fill-opacity="0.8"/>
<polygon points="0.0,344.0 38.5,588 0.0,588" fill="#90C226" fill-opacity="0.85"/>
</symbol></defs></svg>
  <!-- thumbnails pane -->
  <div id="thumbs">
<div class="abs" style="left:35px;top:464.29999999999995px;width:149.200px;height:87.200px;background:#7a1420"></div>
<svg class="abs" style="left:38.4px;top:157.2px;outline:1px solid #c8c8c8" width="142.5" height="80.6" viewBox="62.4 364.2 142.5 80.6" font-family="Liberation Sans,sans-serif"><use href="#facet" x="62.4" y="364.2" width="142.5" height="80.6"/><text x="74" y="382.3" font-size="3.2" fill="#333" font-weight="bold" textLength="92.0" lengthAdjust="spacingAndGlyphs">Студенти та викладачі БДПУ долучилися до збору</text><text x="105.7" y="389.4" font-size="2.6" fill="#a3a3a3" textLength="64.6" lengthAdjust="spacingAndGlyphs">Вони потребують нашої уваги, часу й практичної</text><text x="105.7" y="393.12" font-size="2.6" fill="#a3a3a3" textLength="62.6" lengthAdjust="spacingAndGlyphs">допомоги. Студенти спеціальності 231 Соціальна</text><text x="105.7" y="396.84" font-size="2.6" fill="#a3a3a3" textLength="64.6" lengthAdjust="spacingAndGlyphs">робота долучилися до збору коштів, продуктів та</text><text x="105.7" y="400.56" font-size="2.6" fill="#a3a3a3" textLength="64.6" lengthAdjust="spacingAndGlyphs">речей для благодійної акції "Чотири лапи для</text><text x="105.7" y="404.28" font-size="2.6" fill="#a3a3a3" textLength="62.6" lengthAdjust="spacingAndGlyphs">притулку", щоб забезпечити своїх улюбленців теплом,</text><text x="105.7" y="408.0" font-size="2.6" fill="#a3a3a3" textLength="64.6" lengthAdjust="spacingAndGlyphs">необхідним обладнанням і лікарськими засобами. У</text><text x="105.7" y="411.71999999999997" font-size="2.6" fill="#a3a3a3" textLength="64.6" lengthAdjust="spacingAndGlyphs">подальшому планується проведення волонтерських та</text><text x="105.7" y="415.44" font-size="2.6" fill="#a3a3a3" textLength="64.6" lengthAdjust="spacingAndGlyphs">відповідальних проєктів з метою залучення</text><text x="105.7" y="419.15999999999997" font-size="2.6" fill="#a3a3a3" textLength="55.6" lengthAdjust="spacingAndGlyphs">молоді до підтримки спільноти ... читати далі</text><rect x="74.300" y="387.300" width="14.500" height="8.500" fill="#fff" stroke="#555" stroke-width=".5"/><path d="M76 390h11M76 392h9M76 394h10" stroke="#888" stroke-width=".4"/><rect x="74" y="397.800" width="18" height="10.200" fill="#6f7566"/><rect x="76" y="399.500" width="6" height="5" fill="#a9a390"/><rect x="84" y="400" width="6" height="5" fill="#4e5448"/><path d="M83 408.500l-3.500 6M83 408.500l3.500 6M80 412h6" stroke="#666" stroke-width=".5"/><rect x="92.800" y="397.900" width="9.100" height="15.200" fill="#7d3fa3"/><rect x="93.800" y="409" width="7" height="2.500" fill="#2d1a3d"/><path d="M96 400.500l2.500 4-2.500 3" stroke="#f3d46a" stroke-width=".8" fill="none"/><path d="M95 387.500h4l1 9h-6z" fill="#e9dff3"/><circle cx="97" cy="389" r="1.500" fill="#f0c24a"/></svg>
<svg class="abs" style="left:38.4px;top:260.5px;outline:1px solid #c8c8c8" width="142.5" height="80.6" viewBox="62.4 467.5 142.5 80.6" font-family="Liberation Sans,sans-serif"><use href="#facet" x="62.4" y="467.5" width="142.5" height="80.6"/><rect x="72.900" y="482.100" width="34.900" height="27" fill="#e9f0f3"/><rect x="72.900" y="482.100" width="17" height="5" fill="#2a2a28"/><rect x="91" y="482.100" width="16.800" height="5" fill="#10261c"/><ellipse cx="89" cy="497" rx="10" ry="6.500" fill="#5f8f5a"/><ellipse cx="89" cy="494.500" rx="7" ry="4" fill="#86a889"/><rect x="88" y="499" width="2.500" height="6" fill="#6a4a2a"/><path d="M72.900 503c8-3 20-3 34.900 0v6.100H72.900z" fill="#8cb63c"/><rect x="99" y="492" width="7" height="2.200" fill="#b79ae6"/><rect x="100" y="495.500" width="6" height="2.200" fill="#9fd0f0"/><rect x="75" y="491" width="5" height="1.800" fill="#bcd9a0"/><text x="82" y="490.3" font-size="2.4" fill="#234" font-weight="bold" textLength="15.0" lengthAdjust="spacingAndGlyphs">Я ВИХОДЖУ ЗА МЕЖІ</text><rect x="72.900" y="509.400" width="34.900" height="19.400" fill="#b9dcf3"/><rect x="101" y="509.400" width="6.800" height="5" fill="#2a2f2a"/><path d="M72.900 524c10-3 22-4 34.900-6v10.800H72.900z" fill="#7fae3a"/><rect x="78" y="521" width="7" height="3" fill="#7cc0f0"/><rect x="85" y="517.500" width="7" height="3" fill="#6fcf9a"/><rect x="92" y="514.500" width="7" height="3" fill="#b48be6"/><rect x="73.500" y="525.500" width="6" height="2.500" fill="#e8a93a"/><text x="81" y="513" font-size="2.4" fill="#234" font-weight="bold" textLength="14.0" lengthAdjust="spacingAndGlyphs">Я ВИХОДЖУ ЗА</text><circle cx="115.5" cy="486.4" r="4.5" fill="#f1ead6" stroke="#d9d2bd" stroke-width=".5"/><circle cx="115.5" cy="486.4" r="3.6" fill="#dcb544"/><circle cx="115.5" cy="486.4" r="2.8" fill="#f3e9b8"/><path d="M113.2 487.8l4.0 -3.1M113.0 486.4l4.0 -3.1M114.2 488.6l4.0 -3.1" stroke="#3a72b8" stroke-width="0.8"/><text x="122.6" y="484.3" font-size="2.8" fill="#222" font-weight="bold" textLength="19.0" lengthAdjust="spacingAndGlyphs">ШКОЛА ЛІДЕРІВ</text><rect x="126.300" y="486.400" width="12.700" height="3.900" fill="#f5a81c"/><text x="129.5" y="489.4" font-size="2.2" fill="#7a4a00" font-weight="bold" textLength="6.5" lengthAdjust="spacingAndGlyphs">БДПУ</text><circle cx="116.300" cy="499.700" r="6.400" fill="#3b2240"/><circle cx="116.800" cy="498.300" r="2.600" fill="#e9c9b8"/><path d="M112.500 505c1-3 3-4.500 4.500-4.500s3.500 1.500 4.500 4.500z" fill="#d9dff0"/><text x="124.5" y="497.6" font-size="2.3" fill="#222" font-weight="bold" textLength="27.5" lengthAdjust="spacingAndGlyphs">Лекція-візуалізація «Самоадвокація</text><text x="124.5" y="500.3" font-size="2.3" fill="#222" font-weight="bold" textLength="25.5" lengthAdjust="spacingAndGlyphs">осіб з інвалідністю: від прав до</text><text x="124.5" y="503" font-size="2.3" fill="#222" font-weight="bold" textLength="13.0" lengthAdjust="spacingAndGlyphs">лідерства»</text><text x="115" y="510.5" font-size="1.8" fill="#444" textLength="26.0" lengthAdjust="spacingAndGlyphs">Лектор: Наталія Мацейко, кандидат</text><text x="111" y="512.2" font-size="1.8" fill="#444" textLength="32.0" lengthAdjust="spacingAndGlyphs">педагогічних наук, доцент кафедри соціальної</text><text x="121" y="513.9" font-size="1.8" fill="#444" textLength="12.0" lengthAdjust="spacingAndGlyphs">роботи БДПУ</text><path d="M159.300 479.100H179V533h-45.800c5-12 14-24 26.100-32z" fill="#f5a81c"/><rect x="179" y="479.100" width="1.300" height="52" fill="#fdf4e0"/><circle cx="162.7" cy="494.8" r="11.3" fill="#f1ead6" stroke="#d9d2bd" stroke-width=".5"/><circle cx="162.7" cy="494.8" r="9.0" fill="#dcb544"/><circle cx="162.7" cy="494.8" r="7.0" fill="#f3e9b8"/><path d="M157.0 498.2l10.2 -7.9M156.5 494.8l10.2 -7.9M159.3 500.4l10.2 -7.9" stroke="#3a72b8" stroke-width="1.9"/><text x="150" y="511.3" font-size="2.3" fill="#2a7ab8" font-weight="bold" textLength="22.0" lengthAdjust="spacingAndGlyphs">САМОАДВОКАТУВАННЯ ЯК</text><text x="156" y="514.3" font-size="2.3" fill="#2a7ab8" font-weight="bold" textLength="9.5" lengthAdjust="spacingAndGlyphs">ГОЛОС ЗМІН</text></svg>
<svg class="abs" style="left:38.4px;top:364.2px;outline:1px solid #c8c8c8" width="142.5" height="80.6" viewBox="62.4 571.2 142.5 80.6" font-family="Liberation Sans,sans-serif"><use href="#facet" x="62.4" y="571.2" width="142.5" height="80.6"/><path d="M162.500 576.500H185.400V644.600H137v-2.900h20.500V600z" fill="#f5a81c"/><text x="93" y="584.2" font-size="3" fill="#222" font-weight="bold" textLength="58.4" lengthAdjust="spacingAndGlyphs">САМОАДВОКАТУВАННЯ ЯК ГОЛОС ЗМІН</text><text x="86.2" y="589.1" font-size="3" fill="#222" font-weight="bold" textLength="72.4" lengthAdjust="spacingAndGlyphs">ЯК ЗАХИЩАЮТЬ ПРАВА ЛЮДЕЙ З ІНВАЛІДНІСТЮ</text><rect x="73" y="593.500" width="39.500" height="21" fill="#fff" stroke="#e4e4e4" stroke-width=".3"/><path d="M100 593.500h12.500v21H95z" fill="#f5a81c"/><circle cx="104.500" cy="602" r="3.300" fill="#3a5fa8"/><circle cx="108.300" cy="604.500" r="2" fill="#e9eef8"/><rect x="99" y="610.500" width="11" height="1.500" fill="#2f6fb0"/><circle cx="76.5" cy="596.8" r="2.2" fill="#f1ead6" stroke="#d9d2bd" stroke-width=".5"/><circle cx="76.5" cy="596.8" r="1.8" fill="#dcb544"/><circle cx="76.5" cy="596.8" r="1.4" fill="#f3e9b8"/><path d="M75.4 597.5l2.0 -1.5M75.3 596.8l2.0 -1.5M75.8 597.9l2.0 -1.5" stroke="#3a72b8" stroke-width="0.4"/><rect x="80.500" y="595" width="8" height="1.300" fill="#444"/><rect x="82" y="597" width="5" height="1.500" fill="#f5a81c"/><circle cx="78" cy="605.500" r="3.800" fill="#8a8580"/><circle cx="78" cy="604.500" r="1.600" fill="#d9c4b4"/><path d="M83.500 603h10M83.500 604.800h12M83.500 606.600h9M76 611.500h8M76 613h6" stroke="#777" stroke-width=".5"/><rect x="115" y="593.500" width="8.300" height="20" fill="#0d0d0d"/><rect x="116.300" y="595" width="5.500" height="4" fill="#6b6150"/><rect x="116.300" y="600" width="5.500" height="4" fill="#8a7a60"/><rect x="116.300" y="605" width="5.500" height="4" fill="#4a5a4a"/><rect x="124" y="593.500" width="33" height="20" fill="#fff" stroke="#e4e4e4" stroke-width=".3"/><path d="M125 595h30" stroke="#e46a6a" stroke-width=".4"/><rect x="126" y="598" width="7" height="12" fill="#8a6f58"/><rect x="127.500" y="599.500" width="4" height="5" fill="#e6d6c6"/><rect x="135" y="598.500" width="6" height="1.300" fill="#2a3a6a"/><path d="M135 601.500h19M135 603.200h17M135 606h19M135 607.700h18M135 609.400h15" stroke="#999" stroke-width=".45"/><rect x="73" y="617" width="39.500" height="24.700" fill="#0c0c0c"/><rect x="74" y="618" width="19" height="21" fill="#8e7f66"/><rect x="74" y="618" width="6" height="21" fill="#5d6a55"/><rect x="84" y="618" width="9" height="12" fill="#c9c1ac"/><circle cx="79" cy="627" r="2" fill="#3b58c8"/><rect x="82" y="630" width="8" height="8" fill="#3a3f4a"/><rect x="94" y="618" width="8" height="21" fill="#050505"/><rect x="104" y="619" width="6" height="4.500" fill="#77695a"/><rect x="104" y="625" width="6" height="4.500" fill="#5f6a6a"/><rect x="104" y="631" width="6" height="4.500" fill="#4a4440"/><path d="M74 640.300h16" stroke="#3fb56a" stroke-width=".8"/><path d="M91 640.300h8" stroke="#d9534f" stroke-width=".8"/><rect x="115" y="617" width="42" height="24.700" fill="#fff"/><rect x="115" y="617" width="9.500" height="24.700" fill="#0c0c0c"/><rect x="116.300" y="618.500" width="6.500" height="5" fill="#6a6258"/><rect x="116.300" y="625" width="6.500" height="5" fill="#857a6a"/><rect x="116.300" y="631.500" width="6.500" height="5" fill="#4f5a52"/><rect x="125" y="622" width="10" height="17" fill="#b9a27a"/><rect x="126" y="628" width="3" height="9" fill="#4a78b0"/><rect x="130" y="626" width="4" height="11" fill="#d9c9a0"/><rect x="136" y="621" width="17.500" height="16" fill="#f1e6d6"/><rect x="137.500" y="622.500" width="14.500" height="13" fill="#8a5a3c"/><ellipse cx="145" cy="627" rx="4" ry="3" fill="#d9b89a"/><rect x="138" y="630" width="13" height="5" fill="#5a3a2a"/><path d="M115 640.800h42" stroke="#111" stroke-width="1.600"/><path d="M125 640.800h10" stroke="#3fb56a" stroke-width=".8"/><circle cx="166.5" cy="605.1" r="10.3" fill="#f1ead6" stroke="#d9d2bd" stroke-width=".5"/><circle cx="166.5" cy="605.1" r="8.2" fill="#dcb544"/><circle cx="166.5" cy="605.1" r="6.4" fill="#f3e9b8"/><path d="M161.3 608.2l9.3 -7.2M160.8 605.1l9.3 -7.2M163.4 610.2l9.3 -7.2" stroke="#3a72b8" stroke-width="1.8"/></svg>
<svg class="abs" style="left:38.4px;top:467.6px;outline:1px solid #c8c8c8" width="142.5" height="80.6" viewBox="62.4 674.6 142.5 80.6" font-family="Liberation Sans,sans-serif"><use href="#facet" x="62.4" y="674.6" width="142.5" height="80.6"/><g transform="translate(62.4 674.600) scale(0.13636)"><text x="66.500" y="95.500" font-size="40" fill="#8fc126" textLength="279">Що розвиваємо</text><text x="95.500" y="150.3" font-size="19.500" fill="#5a5a5a" textLength="667"><tspan font-weight="bold">Стратегічна компетентність:</tspan> здатність бачити перспективу, ставити цілі,</text><circle cx="70" cy="143.8" r="2.500" fill="#90c226"/><text x="95.500" y="176.3" font-size="19.500" fill="#5a5a5a" textLength="469">аналізувати ризики та розробляти плани розвитку.</text><text x="95.500" y="213.8" font-size="19.500" fill="#5a5a5a" textLength="646"><tspan font-weight="bold">Соціальна та комунікативна компетентність:</tspan> ефективне спілкування,</text><circle cx="70" cy="207.3" r="2.500" fill="#90c226"/><text x="95.500" y="239.8" font-size="19.500" fill="#5a5a5a" textLength="607">надихання команди, управління конфліктами та розвиток довіри.</text><text x="95.500" y="277.3" font-size="19.500" fill="#5a5a5a" textLength="662"><tspan font-weight="bold">Емоційний інтелект (EQ):</tspan> самоусвідомлення, самоконтроль та емпатія,</text><circle cx="70" cy="270.8" r="2.500" fill="#90c226"/><text x="95.500" y="303.3" font-size="19.500" fill="#5a5a5a" textLength="550">що дозволяють розуміти емоції команди та керувати ними.</text><text x="95.500" y="340.3" font-size="19.500" fill="#5a5a5a" textLength="689"><tspan font-weight="bold">Управління змінами та адаптивність:</tspan> гнучкість мислення, готовність діяти</text><circle cx="70" cy="333.8" r="2.500" fill="#90c226"/><text x="95.500" y="366.3" font-size="19.500" fill="#5a5a5a" textLength="568">в умовах невизначеності та здатність навчатися на помилках.</text><text x="95.500" y="403.8" font-size="19.500" fill="#5a5a5a" textLength="542"><tspan font-weight="bold">Результативність (Вольові якості):</tspan> орієнтація на результат,</text><circle cx="70" cy="397.3" r="2.500" fill="#90c226"/><text x="95.500" y="429.8" font-size="19.500" fill="#5a5a5a" textLength="657">наполегливість, прийняття відповідальності за рішення та делегування</text><text x="95.500" y="455.8" font-size="19.500" fill="#5a5a5a" textLength="129">повноважень.</text></g></svg>
<svg class="abs" style="left:38.4px;top:571.2px;outline:1px solid #c8c8c8" width="142.5" height="80.6" viewBox="62.4 778.2 142.5 80.6" font-family="Liberation Sans,sans-serif"><use href="#facet" x="62.4" y="778.2" width="142.5" height="80.6"/><rect x="62.400" y="778.200" width="108" height="33" fill="#fff"/><rect x="96.400" y="779" width="43" height="32" fill="#fff"/><path d="M97 780.500h40" stroke="#ccc" stroke-width=".5" stroke-dasharray="1 .6"/><path d="M97.500 784h37" stroke="#666" stroke-width=".55"/><path d="M97.500 785.6h30" stroke="#999" stroke-width=".55"/><path d="M97.500 788.5h38" stroke="#666" stroke-width=".55"/><path d="M97.500 790.1h38" stroke="#999" stroke-width=".55"/><path d="M97.500 791.7h38" stroke="#999" stroke-width=".55"/><path d="M97.500 793.3h36" stroke="#999" stroke-width=".55"/><path d="M97.500 794.9h38" stroke="#999" stroke-width=".55"/><path d="M97.500 796.5h20" stroke="#999" stroke-width=".55"/><path d="M97.500 799.5h38" stroke="#666" stroke-width=".55"/><path d="M97.500 801.1h38" stroke="#999" stroke-width=".55"/><path d="M97.500 802.7h38" stroke="#999" stroke-width=".55"/><path d="M97.500 804.3h38" stroke="#999" stroke-width=".55"/><path d="M97.500 805.9h30" stroke="#999" stroke-width=".55"/><path d="M97.500 808.5h12" stroke="#777" stroke-width=".55"/><rect x="139" y="780.300" width="3.600" height="30" fill="#e9e2d6"/><rect x="139.300" y="782" width="3" height="3.500" fill="#e08a3a"/><rect x="139.300" y="788" width="3" height="3.500" fill="#b9805a"/><rect x="139.300" y="794" width="3" height="3.500" fill="#d9a070"/><rect x="139.300" y="800" width="3" height="3.500" fill="#c07a4a"/><rect x="142.600" y="780.300" width="14.500" height="30" fill="#161616"/><rect x="143.600" y="781.500" width="12.500" height="8" fill="#7f8a78"/><circle cx="149.800" cy="785" r="2.200" fill="#e0b8a0"/><rect x="143.600" y="790.500" width="12.500" height="7" fill="#8a9a88"/><circle cx="150" cy="793.500" r="2" fill="#dfb59c"/><rect x="143.600" y="798.500" width="12.500" height="8" fill="#9aa8a0"/><circle cx="150" cy="801.500" r="2.300" fill="#e8a050"/><rect x="146" y="803.500" width="8" height="3" fill="#e07a30"/><path d="M160.300 783v16" stroke="#bbb" stroke-width=".6"/><rect x="62.400" y="810.800" width="45" height="39.500" fill="#fff"/><path d="M64.300 830v20" stroke="#7cc03a" stroke-width=".7"/><path d="M63.500 812h42" stroke="#ccc" stroke-width=".5" stroke-dasharray="1 .6"/><path d="M65 815h40" stroke="#777" stroke-width=".55"/><path d="M65 816.6h34" stroke="#999" stroke-width=".55"/><path d="M65 818.2h12" stroke="#666" stroke-width=".55"/><path d="M65 822h41" stroke="#777" stroke-width=".55"/><path d="M65 823.6h41" stroke="#999" stroke-width=".55"/><path d="M65 825.2h41" stroke="#999" stroke-width=".55"/><path d="M65 826.8h41" stroke="#999" stroke-width=".55"/><path d="M65 828.4h41" stroke="#999" stroke-width=".55"/><path d="M65 830h26" stroke="#999" stroke-width=".55"/><path d="M65 833.5h41" stroke="#777" stroke-width=".55"/><path d="M65 835.1h30" stroke="#999" stroke-width=".55"/><path d="M65 838.5h41" stroke="#999" stroke-width=".55"/><path d="M65 840.1h41" stroke="#999" stroke-width=".55"/><path d="M65 841.7h41" stroke="#999" stroke-width=".55"/><path d="M65 843.3h41" stroke="#999" stroke-width=".55"/><path d="M65 844.9h41" stroke="#999" stroke-width=".55"/><path d="M65 846.5h33" stroke="#999" stroke-width=".55"/><rect x="107" y="810.200" width="27.500" height="43.500" fill="#1a1a1a"/><rect x="108.5" y="812" width="11.500" height="7.500" fill="#5a6a5a"/><circle cx="114.2" cy="815.2" r="2" fill="#dbb49e"/><rect x="121" y="812" width="11.500" height="7.500" fill="#6a705a"/><circle cx="126.7" cy="815.2" r="2" fill="#d2ac94"/><rect x="108.5" y="821" width="11.500" height="7.500" fill="#2f3532"/><circle cx="114.2" cy="824.2" r="2" fill="#c9a891"/><rect x="121" y="821" width="11.500" height="7.500" fill="#2a2a2a"/><circle cx="126.7" cy="824.2" r="2" fill="#8a7a5a"/><rect x="108.5" y="830" width="11.500" height="7.500" fill="#343434"/><circle cx="114.2" cy="833.2" r="2" fill="#b8967f"/><rect x="121" y="830" width="11.500" height="7.500" fill="#2c2c2c"/><circle cx="126.7" cy="833.2" r="2" fill="#7a6a4a"/><rect x="108.5" y="839" width="11.500" height="7.500" fill="#3a3a34"/><circle cx="114.2" cy="842.2" r="2" fill="#c0a46a"/><rect x="121" y="839" width="11.500" height="7.500" fill="#303030"/><circle cx="126.7" cy="842.2" r="2" fill="#a9986a"/><rect x="134.300" y="810.200" width="50" height="44" fill="#0c0c0c"/><rect x="135.200" y="813" width="42.200" height="36" fill="#fff"/><text x="137.5" y="819.2" font-size="4.600" fill="#2a2a2a" textLength="37.5" lengthAdjust="spacing">А Б В Г Ґ Д</text><text x="137.5" y="826.1" font-size="4.600" fill="#2a2a2a" textLength="37.5" lengthAdjust="spacing">Е Є Ж З И І</text><text x="137.5" y="833.0" font-size="4.600" fill="#2a2a2a" textLength="37.5" lengthAdjust="spacing">Ї Й К Л М Н</text><text x="137.5" y="839.9000000000001" font-size="4.600" fill="#2a2a2a" textLength="37.5" lengthAdjust="spacing">О П Р С Т У</text><text x="137.5" y="846.8000000000001" font-size="4.600" fill="#2a2a2a" textLength="37.5" lengthAdjust="spacing">Ф Х Ц Ч Ш Щ</text><path d="M135.200 847.800h9" stroke="#3fb56a" stroke-width="1.600"/><circle cx="138" cy="847" r="1" fill="#3fb56a"/><circle cx="142" cy="847" r="1" fill="#3fb56a"/><path d="M146 848.600h30" stroke="#d9826a" stroke-width="1"/><rect x="183.700" y="810.200" width="17.500" height="43.500" fill="#121212"/><rect x="184.700" y="812" width="15.500" height="9" fill="#8f9a90"/><circle cx="192.500" cy="816" r="2.500" fill="#dcb39b"/><rect x="184.700" y="822" width="15.500" height="8" fill="#a0aaa0"/><circle cx="192.500" cy="825.500" r="2.300" fill="#dcb39b"/><rect x="184.700" y="831" width="15.500" height="8" fill="#2a2a2a"/><circle cx="192.500" cy="834.500" r="2.300" fill="#cfa58c"/><path d="M186 842.500h13M188 844.500h9" stroke="#aaa" stroke-width=".5"/><rect x="62.400" y="850.200" width="72" height="3.700" fill="#0a0a0a"/><path d="M67 852h3M73 852h3M79 852h3" stroke="#888" stroke-width=".7"/><path d="M84 851.500h14" stroke="#3fb56a" stroke-width="1"/><path d="M98 851.500h12" stroke="#d9534f" stroke-width="1"/><path d="M115 852h3M122 852h3" stroke="#888" stroke-width=".7"/><rect x="134.300" y="854" width="67" height="3.300" fill="#eef3f8"/><path d="M144 855.700h2M148 855.700h2M152 855.700h2M156 855.700h2M160 855.700h2M164 855.700h2" stroke="#3a7ad9" stroke-width="1.200"/><path d="M183 855.700h3M189 855.700h6" stroke="#667" stroke-width=".6"/><path d="M146 852h3M156 852h3M166 852h3M176 852h3M186 852h3M194 852h3" stroke="#777" stroke-width=".7"/></svg>
<svg class="abs" style="left:38.4px;top:674.8px;outline:1px solid #c8c8c8" width="142.5" height="80.6" viewBox="62.4 881.8 142.5 80.6" font-family="Liberation Sans,sans-serif"><use href="#facet" x="62.4" y="881.8" width="142.5" height="80.6"/><text x="75.3" y="899" font-size="1.7" fill="#555" textLength="7.7" lengthAdjust="spacingAndGlyphs">14.04.2026</text><text x="75.1" y="904.5" font-size="4.4" fill="#333" font-weight="bold" textLength="85.9" lengthAdjust="spacingAndGlyphs">Бінарне заняття: мистецтво і оздоровчі</text><text x="75.1" y="909.8" font-size="4.4" fill="#333" font-weight="bold" textLength="85.9" lengthAdjust="spacingAndGlyphs">технології в роботі з особливими</text><text x="75.1" y="915.1" font-size="4.4" fill="#333" font-weight="bold" textLength="14.4" lengthAdjust="spacingAndGlyphs">дітьми</text><text x="75.1" y="922.9" font-size="2.7" fill="#8c8c8c" textLength="87.2" lengthAdjust="spacingAndGlyphs">Використання елементів театральних технологій в роботі з дітьми з</text><text x="75.1" y="926.97" font-size="2.7" fill="#8c8c8c" textLength="87.2" lengthAdjust="spacingAndGlyphs">ООП. Дисципліна «Корекційно-оздоровчі технології в роботі з дітьми з</text><text x="75.1" y="931.04" font-size="2.7" fill="#8c8c8c" textLength="82.4" lengthAdjust="spacingAndGlyphs">особливими освітніми потребами» спрямована на формування</text><text x="75.1" y="935.11" font-size="2.7" fill="#8c8c8c" textLength="80.4" lengthAdjust="spacingAndGlyphs">практичних навичок використання елементів різних технологій в</text><text x="75.1" y="939.18" font-size="2.7" fill="#8c8c8c" textLength="86.4" lengthAdjust="spacingAndGlyphs">роботі практичного психолога та логопеда, вихователя, соціального праців</text></svg>
<span class="t" style="letter-spacing:-0.044px;top:257.50px;left:13px;font-size:15px;color:#444">8</span>
<span class="t" style="letter-spacing:-0.044px;top:361.30px;left:13px;font-size:15px;color:#444">9</span>
<span class="t" style="letter-spacing:-0.288px;top:464.60px;left:5.199999999999999px;font-size:15px;color:#d24726">10</span>
<span class="t" style="letter-spacing:0.822px;top:568.30px;left:5.199999999999999px;font-size:15px;color:#444">11</span>
<span class="t" style="letter-spacing:-0.288px;top:671.90px;left:5.199999999999999px;font-size:15px;color:#444">12</span>
<svg class="abs" style="left:95.5px;top:631.5px" width="14" height="22" viewBox="0 0 14 22"><path d="M1.500 1.200v16.300l3.700-3.600 2.700 6.300 2.600-1.100-2.700-6.200h5.200z" fill="#fff" stroke="#111" stroke-width="1.100"/></svg>
</div>
  <!-- pane scrollbar -->
  <div class="abs" style="left:201.5px;top:172px;width:17.300px;height:615px;background:#dcdbdc"></div>
  <div class="abs" style="left:201.9px;top:490.29999999999995px;width:16.400px;height:277.5px;background:#fff"></div>
  <div class="abs" style="left:201.9px;top:174px;width:16.400px;height:16.5px;background:#fff"></div>
  <div class="abs" style="left:201.9px;top:768.5px;width:16.400px;height:17px;background:#fff"></div>
  <svg class="abs" style="left:203.1px;top:172px" width="14" height="615" viewBox="0 0 14 615" fill="#666"><path d="M3 12l4-4.300 4 4.300zM3 603l4 4.300 4-4.300z"/></svg>
  <div class="abs" style="left:222px;top:172px;width:1px;height:615px;background:#c2c2c2"></div>
  <!-- slide -->
  <svg class="abs" style="left:270.5px;top:183px;outline:1px solid #c4c4c4" width="1045.500" height="589"><use href="#facet" width="1045.500" height="589"/></svg>
  <span class="t" style="letter-spacing:-0.921px;top:244.64px;left:337px;font-size:40px;color:#8fc126">Що розвиваємо</span>
  <span class="t sl" style="letter-spacing:-0.440px;top:316.79px;font-weight:bold">Стратегічна компетентність:</span><span class="t sl" style="letter-spacing:0.216px;top:316.79px;left:634.9px">здатність бачити перспективу, ставити цілі,</span>
  <span class="t sl" style="letter-spacing:0.280px;top:342.79px">аналізувати ризики та розробляти плани розвитку.</span>
  <span class="t sl" style="letter-spacing:-0.328px;top:380.29px;font-weight:bold">Соціальна та комунікативна компетентність:</span><span class="t sl" style="letter-spacing:0.118px;top:380.29px;left:792.8px">ефективне спілкування,</span>
  <span class="t sl" style="letter-spacing:0.307px;top:406.29px">надихання команди, управління конфліктами та розвиток довіри.</span>
  <span class="t sl" style="letter-spacing:-0.279px;top:443.79px;font-weight:bold">Емоційний інтелект (EQ):</span><span class="t sl" style="letter-spacing:0.227px;top:443.79px;left:607.5px">самоусвідомлення, самоконтроль та емпатія,</span>
  <span class="t sl" style="letter-spacing:0.319px;top:469.79px">що дозволяють розуміти емоції команди та керувати ними.</span>
  <span class="t sl" style="letter-spacing:-0.341px;top:506.79px;font-weight:bold">Управління змінами та адаптивність:</span><span class="t sl" style="letter-spacing:0.212px;top:506.79px;left:721.0px">гнучкість мислення, готовність діяти</span>
  <span class="t sl" style="letter-spacing:0.144px;top:532.79px">в умовах невизначеності та здатність навчатися на помилках.</span>
  <span class="t sl" style="letter-spacing:-0.612px;top:570.29px;font-weight:bold">Результативність (Вольові якості):</span><span class="t sl" style="letter-spacing:0.185px;top:570.29px;left:688.3px">орієнтація на результат,</span>
  <span class="t sl" style="letter-spacing:0.170px;top:596.29px">наполегливість, прийняття відповідальності за рішення та делегування</span>
  <span class="t sl" style="letter-spacing:0.399px;top:622.29px">повноважень.</span>
  <div class="abs" style="left:338.3px;top:325px;width:4.400px;height:4.400px;border-radius:50%;background:#90c226"></div>
  <div class="abs" style="left:338.3px;top:388.5px;width:4.400px;height:4.400px;border-radius:50%;background:#90c226"></div>
  <div class="abs" style="left:338.3px;top:452px;width:4.400px;height:4.400px;border-radius:50%;background:#90c226"></div>
  <div class="abs" style="left:338.3px;top:515px;width:4.400px;height:4.400px;border-radius:50%;background:#90c226"></div>
  <div class="abs" style="left:338.3px;top:578.5px;width:4.400px;height:4.400px;border-radius:50%;background:#90c226"></div>
  <div class="abs" style="left:0;top:172px;width:1380px;height:4px;background:linear-gradient(#c9c7c6,rgba(214,212,211,0))"></div>
  <!-- right scrollbar -->
  <div class="abs" style="left:1361.3px;top:172px;width:17.500px;height:553px;background:#dcdbdc"></div>
  <div class="abs" style="left:1361.8px;top:174px;width:16.500px;height:16.5px;background:#fff"></div>
  <div class="abs" style="left:1361.8px;top:708.5px;width:16.500px;height:16.5px;background:#fff"></div>
  <div class="abs" style="left:1361.8px;top:580px;width:16.500px;height:41.5px;background:#fff"></div>
  <svg class="abs" style="left:1361.6px;top:172px" width="17" height="615" viewBox="0 0 17 615" fill="#666"><path d="M4.500 12l4-4.300 4 4.300zM4.500 542.500l4 4.300 4-4.300z"/><path d="M5 563.500l3.500-4 3.500 4zM5 568l3.500-4 3.500 4zM5 578l3.500 4 3.500-4zM5 582.500l3.500 4 3.500-4z"/></svg>
</div></div>
  <div id="pstatus">
  <span class="t" style="letter-spacing:-0.333px;top:7.07px;left:8px;font-size:11.500px;color:#5c5a58">Слайд 10 з 12</span>
  <svg class="abs" style="left:98px;top:3px" width="18" height="18" viewBox="0 0 18 18" fill="none" stroke="#444" stroke-width="1.100"><path d="M9 14.500H2.500v-12h9.500v6"/><path d="M5 6l1.500 1.500 3-3.500" stroke-width="1"/><path d="M11 11l5 5M16 11l-5 5" stroke-width="1.200"/></svg>
  <span class="t" style="letter-spacing:-0.227px;top:7.07px;left:131.5px;font-size:11.500px;color:#5c5a58">українська</span>
  <svg class="abs" style="left:916px;top:2px" width="18" height="20" viewBox="0 0 18 20" fill="none" stroke="#444" stroke-width="1.100"><path d="M.5 10.500h17M.5 13.500h17M.5 16.500h17M6.300 6.800l2.700-2.700 2.700 2.700"/></svg>
  <span class="t" style="letter-spacing:0.008px;top:7.07px;left:936px;font-size:11.500px;color:#5c5a58">Нотатки</span>
  <div class="abs" style="left:997px;top:0;width:44px;height:23px;background:#c8c6c4"></div>
  <svg class="abs" style="left:997px;top:0" width="383" height="23" viewBox="1021 995 383 23" fill="none" stroke="#444" stroke-width="1.100">
    <path d="M1035.500 1000.500h15v12h-15zM1038.500 1003h9v6h-9zM1035.500 1003h2M1035.500 1006h2M1035.500 1009h2" />
    <path d="M1079.500 1000.500h5.500v5h-5.500zM1087.500 1000.500h5.500v5h-5.500zM1079.500 1008h5.500v5h-5.500zM1087.500 1008h5.500v5h-5.500z"/>
    <path d="M1129 1002.500v10.500M1129 1002.500c-2-1.500-4.500-2-6.500-2v10.500c2 0 4.500.5 6.500 2 2-1.500 4.500-2 6.500-2v-10.500c-2 0-4.500.5-6.500 2M1124.500 1003.500h2.500M1124.500 1006h2.500M1131 1003.500h2.500M1131 1006h2.500" stroke-width="1"/>
    <path d="M1164.500 1000.500h15M1166 1000.500v8h12v-8M1172 1008.500v4.500M1169 1013.500h6.500"/>
    <path d="M1200 1006.500h7M1326.500 1006.500h7M1330 1003v7" stroke="#605e5c"/><path d="M1214 1006.500h106" stroke="#8a8886" stroke-width="1"/><path d="M1266.500 1003.500v6" stroke="#8a8886" stroke-width="1"/>
    <rect x="1252.500" y="1000" width="4" height="13" fill="#605e5c" stroke="none"/>
    <path d="M1388 1003.500h6.500v6.500h-6.500zM1386.300 1004l-2.400 2.700 2.400 2.700M1396.200 1004l2.400 2.700-2.400 2.700M1388.500 1001.300l2.700-2.400 2.700 2.400M1388.500 1012.200l2.700 2.400 2.700-2.400"/>
  </svg>
  <span class="t" style="letter-spacing:-0.266px;top:7.07px;left:1323.5px;font-size:11.500px;color:#5c5a58">76%</span>
</div>
</div>

<!-- PARTICIPANTS PANEL -->
<div id="pp">
  <div id="pphead"></div>
</div>

<svg width="0" height="0" style="position:absolute"><defs>
<symbol id="mic" viewBox="0 0 20 22"><rect x="6.900" y="2" width="6.200" height="11.400" rx="3.100" fill="none" stroke="currentColor" stroke-width="1.300"/><path d="M4.200 9.800c0 3.600 2.400 6 5.800 6s5.800-2.400 5.800-6M10 15.900v3.300M7.200 19.500h5.600" fill="none" stroke="currentColor" stroke-width="1.300"/></symbol>
<symbol id="micf" viewBox="0 0 20 22"><rect x="6.600" y="1.700" width="6.800" height="12" rx="3.400" fill="currentColor"/><path d="M4.200 9.800c0 3.600 2.400 6 5.800 6s5.800-2.400 5.800-6M10 15.900v3.300M7.200 19.500h5.600" fill="none" stroke="currentColor" stroke-width="1.300"/></symbol>
<symbol id="micx" viewBox="0 0 20 22"><path d="M13.100 6.500V5.100c0-1.700-1.400-3.100-3.100-3.100S6.900 3.400 6.900 5.100v5.200c0 .9.400 1.700 1 2.300M11.800 12.800c.8-.6 1.300-1.500 1.300-2.500" fill="none" stroke="currentColor" stroke-width="1.300"/><path d="M4.200 9.800c0 1.800.6 3.300 1.600 4.300M8.500 15.600c.5.100 1 .2 1.500.2 3.400 0 5.800-2.400 5.800-6M10 15.900v3.300M7.200 19.500h5.600" fill="none" stroke="currentColor" stroke-width="1.300"/><path d="M19.800 1L.5 21" stroke="currentColor" stroke-width="1.300"/></symbol>
<symbol id="cam" viewBox="0 0 22 14"><rect x=".7" y="1" width="14.300" height="11.700" rx="3" fill="none" stroke="currentColor" stroke-width="1.300"/><path d="M15.500 5.300l4.300-3c.3-.2.600 0 .6.300v8.500c0 .3-.3.500-.6.300l-4.300-3" fill="none" stroke="currentColor" stroke-width="1.300"/></symbol>
<symbol id="camx" viewBox="0 0 22 22"><path d="M2.500 16.200c-1.100-.4-1.800-1.400-1.800-2.600V8c0-1.700 1.300-3 3-3h8.300c.9 0 1.700.4 2.200 1M15 10.500v3.200c0 1.700-1.300 3-3 3H6.500" fill="none" stroke="currentColor" stroke-width="1.300"/><path d="M15.500 9.300l4.300-3c.3-.2.600 0 .6.300v8.500c0 .3-.3.500-.6.300l-4.300-3" fill="none" stroke="currentColor" stroke-width="1.300"/><path d="M20.300 1.200L.6 20.600" stroke="currentColor" stroke-width="1.300"/></symbol>
</defs></svg>
<div id="ppc" style="position:absolute;left:0;top:0">
<span class="t" style="letter-spacing:-0.049px;top:86.16px;left:1581.700px;font-size:16px;font-weight:bold;color:#fff">Participants (14)</span>
<svg class="abs" style="left:1843px;top:82px" width="56" height="22" viewBox="1843 82 56 22" fill="none" stroke="#a9a9a9"><path d="M1852.500 85.500h-3c-2 0-3.500 1.500-3.500 3.500v8c0 2 1.500 3.500 3.500 3.500h8.500c2 0 3.500-1.500 3.500-3.500v-2.500" stroke-width="1.900"/><path d="M1852.500 94.500l9-9M1856 84.800h6.300v6.300" stroke-width="1.900"/><path d="M1880.500 86.500l13 13M1893.500 86.500l-13 13" stroke-width="1.300"/></svg>
<div class="abs" style="left:1466px;top:134px;width:423px;height:39.500px;border:1px solid #6b6b6b;border-radius:8px"></div>
<svg class="abs" style="left:1479px;top:145px" width="18" height="18" viewBox="0 0 18 18" fill="none" stroke="#a6a6a6" stroke-width="1.400"><circle cx="8" cy="8" r="5.600"/><path d="M12.200 12.200l3.800 3.800"/></svg>
<span class="t" style="letter-spacing:-0.196px;top:145.76px;left:1501.200px;font-size:16px;color:#a2a2a2">Find a participant</span>
<div class="abs" style="left:1445.500px;top:431.500px;width:462px;height:51px;background:#2e2e2e"></div>
<div class="av" style="top:184.3px"><svg width="34.700" height="34.700" viewBox="0 0 35 35"><rect width="35" height="35" fill="#3b2413"/><g filter="url(#b1)"><rect x="0" y="0" width="8" height="35" fill="#6a401c"/><rect x="27" y="0" width="8" height="35" fill="#2e2418"/><ellipse cx="17" cy="7.500" rx="5.500" ry="6.500" fill="#e3b99c"/><path d="M11 6c0-5 3-7 6.500-7s6 2.500 6 7c-2-3-9-3-12.500 0z" fill="#c98f58"/><path d="M7 35c0-12 3-19 10.500-19S29 22 29 35z" fill="#8c9a36"/><path d="M10 24l10-3 4 14H12z" fill="#f1efe9"/><path d="M11 25l9 8M12.500 24.500l9 8" stroke="#e0922e" stroke-width="1"/><path d="M14 24l9 8" stroke="#3a6ab8" stroke-width="1"/></g></svg></div>
<span class="t" style="letter-spacing:-0.275px;top:196.46px;left:1512.300px;font-size:16px;color:#f2f2f2">Наталія Мацейко (Host, me)</span>
<svg class="abs" style="left:1839px;top:191.5px;color:#ee5f58" width="20" height="22"><use href="#micx"/></svg><svg class="abs" style="left:1868.500px;top:195.0px;color:#a9a9a9" width="22" height="14"><use href="#cam"/></svg>
<div class="av" style="top:235.3px;background:#2f86c4"><span class="t" style="top:10.66px;left:0;width:34.700px;text-align:center;font-size:16px;font-weight:bold;color:#fff">AM</span></div>
<span class="t" style="letter-spacing:-0.155px;top:247.46px;left:1512.300px;font-size:16px;color:#f2f2f2">Alla Melnychuk</span>
<svg class="abs" style="left:1839px;top:242.5px;color:#b0b0b0" width="20" height="22"><use href="#micf"/></svg><svg class="abs" style="left:1868.500px;top:246.0px;color:#a9a9a9" width="22" height="14"><use href="#cam"/></svg>
<div class="av" style="top:286.3px;background:#d65a06"><span class="t" style="top:10.66px;left:0;width:34.700px;text-align:center;font-size:16px;font-weight:bold;color:#fff">LL</span></div>
<span class="t" style="letter-spacing:-0.347px;top:298.46px;left:1512.300px;font-size:16px;color:#f2f2f2">Lukianchenko Lyusiena</span>
<svg class="abs" style="left:1839px;top:293.5px;color:#b0b0b0" width="20" height="22"><use href="#mic"/></svg><svg class="abs" style="left:1868.500px;top:293.0px;color:#ee5f58" width="22" height="22"><use href="#camx"/></svg>
<div class="av" style="top:337.3px"><svg width="34.700" height="34.700" viewBox="0 0 35 35"><rect width="35" height="35" fill="#2b2114"/><g filter="url(#b1)"><rect x="0" y="4" width="8" height="20" fill="#5f6a3a"/><rect x="28" y="0" width="7" height="35" fill="#5a3d1e"/><path d="M8 30c-1-14 2-27 10-27s11 10 9 27z" fill="#b5562a"/><ellipse cx="18.500" cy="13.500" rx="4.800" ry="6.300" fill="#ecc4ae"/><path d="M6 35c1-6 5-9 9-10l4 4 5-4c5 1 8 5 9 10z" fill="#1c1a1c"/><path d="M14 35l5-9 4 9z" fill="#c8202c"/><path d="M9 35c0-8 2-12 5-14 0 5-1 10 0 14z" fill="#b5562a"/></g></svg></div>
<span class="t" style="letter-spacing:-0.357px;top:349.46px;left:1512.300px;font-size:16px;color:#f2f2f2">Катерина Петровська</span>
<svg class="abs" style="left:1839px;top:344.5px;color:#b0b0b0" width="20" height="22"><use href="#mic"/></svg><svg class="abs" style="left:1868.500px;top:348.0px;color:#a9a9a9" width="22" height="14"><use href="#cam"/></svg>
<div class="av" style="top:388.3px;background:#d65a06"><span class="t" style="top:10.66px;left:0;width:34.700px;text-align:center;font-size:16px;font-weight:bold;color:#fff">MS</span></div>
<span class="t" style="letter-spacing:-0.127px;top:400.46px;left:1512.300px;font-size:16px;color:#f2f2f2">Mariia Shurdenko</span>
<svg class="abs" style="left:1839px;top:395.5px;color:#ee5f58" width="20" height="22"><use href="#micx"/></svg><svg class="abs" style="left:1868.500px;top:395.0px;color:#ee5f58" width="22" height="22"><use href="#camx"/></svg>
<div class="av" style="top:439.3px;background:#8e44ad"><span class="t" style="top:10.66px;left:0;width:34.700px;text-align:center;font-size:16px;font-weight:bold;color:#fff">NT</span></div>
<span class="t" style="letter-spacing:-0.103px;top:451.46px;left:1512.300px;font-size:16px;color:#f2f2f2">Natalia Titiiova</span>
<svg class="abs" style="left:1868.500px;top:446.0px;color:#ee5f58" width="22" height="22"><use href="#camx"/></svg>
<div class="av" style="top:490.3px;background:#33485e"><span class="t" style="top:10.66px;left:0;width:34.700px;text-align:center;font-size:16px;font-weight:bold;color:#fff">YK</span></div>
<span class="t" style="letter-spacing:-0.983px;top:502.46px;left:1512.300px;font-size:16px;color:#f2f2f2">Yanina KRAVCHENKO</span>
<svg class="abs" style="left:1839px;top:497.5px;color:#ee5f58" width="20" height="22"><use href="#micx"/></svg><svg class="abs" style="left:1868.500px;top:501.0px;color:#a9a9a9" width="22" height="14"><use href="#cam"/></svg>
<div class="av" style="top:541.4px"><svg width="34.700" height="34.700" viewBox="0 0 35 35"><rect width="35" height="35" fill="#1a130d"/><g filter="url(#b1)"><rect x="0" y="0" width="7" height="35" fill="#4a3418"/><rect x="26" y="0" width="9" height="20" fill="#3a2a1a"/><path d="M10 22c-1-12 2-20 8-20s9 8 8 20z" fill="#2a1a12"/><ellipse cx="18" cy="10.500" rx="4.600" ry="6" fill="#e0b394"/><path d="M4 35c1-8 5-12 10-13l4 3 4-3c5 1 9 5 10 13z" fill="#141416"/><path d="M13.500 22.500l4.500 3 4.500-3 1 12.500h-11z" fill="#efeae4"/><path d="M16.500 16.500h3" stroke="#b8403a" stroke-width="1"/></g></svg></div>
<span class="t" style="letter-spacing:-0.473px;top:553.46px;left:1512.300px;font-size:16px;color:#f2f2f2">Анастасія Попова</span>
<svg class="abs" style="left:1839px;top:548.5px;color:#ee5f58" width="20" height="22"><use href="#micx"/></svg><svg class="abs" style="left:1868.500px;top:552.0px;color:#a9a9a9" width="22" height="14"><use href="#cam"/></svg>
<div class="av" style="top:592.4px;background:#a443bf"><span class="t" style="top:7.57px;left:0;width:34.700px;text-align:center;font-size:20px;font-weight:normal;color:#fff">A</span></div>
<span class="t" style="letter-spacing:-0.506px;top:604.46px;left:1512.300px;font-size:16px;color:#f2f2f2">Анастасія Тургенєва</span>
<svg class="abs" style="left:1839px;top:599.5px;color:#ee5f58" width="20" height="22"><use href="#micx"/></svg><svg class="abs" style="left:1868.500px;top:599.0px;color:#ee5f58" width="22" height="22"><use href="#camx"/></svg>
<div class="av" style="top:643.4px;background:#7d55c0"><span class="t" style="top:7.57px;left:0;width:34.700px;text-align:center;font-size:20px;font-weight:normal;color:#fff">A</span></div>
<span class="t" style="letter-spacing:-0.506px;top:655.46px;left:1512.300px;font-size:16px;color:#f2f2f2">Анастасія Тургенєва</span>
<svg class="abs" style="left:1839px;top:650.5px;color:#ee5f58" width="20" height="22"><use href="#micx"/></svg><svg class="abs" style="left:1868.500px;top:650.0px;color:#ee5f58" width="22" height="22"><use href="#camx"/></svg>
<div class="av" style="top:694.4px"><svg width="34.700" height="34.700" viewBox="0 0 35 35"><rect width="35" height="35" fill="#7b5a3e"/><g filter="url(#b1)"><rect x="0" y="0" width="35" height="9" fill="#b89a6e"/><rect x="0" y="9" width="35" height="5" fill="#5a4028"/><rect x="3" y="14" width="8" height="21" fill="#9a7a5a"/><rect x="24" y="14" width="9" height="21" fill="#a88a68"/><ellipse cx="17.500" cy="24" rx="9" ry="10" fill="#c7b79e"/><ellipse cx="17.500" cy="20.500" rx="2.600" ry="3" fill="#dcb8a0"/><path d="M11.500 35c0-7 2.500-10.500 6-10.500s6 3.500 6 10.500z" fill="#1c1c22"/></g></svg></div>
<span class="t" style="letter-spacing:-0.420px;top:706.46px;left:1512.300px;font-size:16px;color:#f2f2f2">Євгеній</span>
<svg class="abs" style="left:1839px;top:701.5px;color:#ee5f58" width="20" height="22"><use href="#micx"/></svg><svg class="abs" style="left:1868.500px;top:705.0px;color:#a9a9a9" width="22" height="14"><use href="#cam"/></svg>
<div class="av" style="top:745.4px"><svg width="34.700" height="34.700" viewBox="0 0 35 35"><rect width="35" height="35" fill="#cfcfd1"/><g filter="url(#b1)"><path d="M6 30c-2-16 2-27 12-27s13 11 11 27z" fill="#2c1d1a"/><ellipse cx="17.500" cy="13.500" rx="5.800" ry="7.200" fill="#ecc9b8"/><path d="M3 35c1-6 5-8 10-9l4.500 3 4.500-3c5 1 9 3 10 9z" fill="#e9e3df"/><path d="M15 18.200h5" stroke="#b03038" stroke-width="1.200"/><path d="M10 12c1-6 5-8 9-7-3 1-6 4-7 9z" fill="#2c1d1a"/></g></svg></div>
<span class="t" style="letter-spacing:-0.245px;top:757.46px;left:1512.300px;font-size:16px;color:#f2f2f2">Людмила Костецька</span>
<svg class="abs" style="left:1839px;top:752.5px;color:#ee5f58" width="20" height="22"><use href="#micx"/></svg><svg class="abs" style="left:1868.500px;top:752.0px;color:#ee5f58" width="22" height="22"><use href="#camx"/></svg>
<div class="av" style="top:796.4px"><svg width="34.700" height="34.700" viewBox="0 0 35 35"><rect width="35" height="35" fill="#dfe9ee"/><g filter="url(#b1)"><rect x="0" y="6" width="9" height="29" fill="#8ed0e6"/><rect x="0" y="26" width="6" height="9" fill="#4aa8c8"/><path d="M11 22c-2-12 2-20 9-20s11 8 9 20z" fill="#e8d4a8"/><ellipse cx="20" cy="13" rx="5.500" ry="6.800" fill="#ecc8b4"/><path d="M8 35c1-7 5-10 10-11l3 1 5-1c5 1 8 4 9 11z" fill="#3a2428"/><path d="M12 30c2-4 5-6 8-6l1 5c-3 1-6 3-7 6z" fill="#e2bda8"/></g></svg></div>
<span class="t" style="letter-spacing:-0.487px;top:808.46px;left:1512.300px;font-size:16px;color:#f2f2f2">Наталья Борисенко</span>
<svg class="abs" style="left:1839px;top:803.5px;color:#ee5f58" width="20" height="22"><use href="#micx"/></svg><svg class="abs" style="left:1868.500px;top:803.0px;color:#ee5f58" width="22" height="22"><use href="#camx"/></svg>
<div class="av" style="top:847.4px;background:#27ae60"><span class="t" style="top:10.66px;left:0;width:34.700px;text-align:center;font-size:16px;font-weight:bold;color:#fff">O</span></div>
<span class="t" style="letter-spacing:-0.268px;top:859.46px;left:1512.300px;font-size:16px;color:#f2f2f2">Оксана Антолик</span>
<svg class="abs" style="left:1839px;top:854.5px;color:#ee5f58" width="20" height="22"><use href="#micx"/></svg><svg class="abs" style="left:1868.500px;top:854.0px;color:#ee5f58" width="22" height="22"><use href="#camx"/></svg>
<svg class="abs" style="left:1808px;top:245px" width="22" height="17" viewBox="0 0 22 17" fill="none" stroke="#1fd68a" stroke-width="1.400"><rect x="1.200" y="1.200" width="19.600" height="14" rx="2.500"/><path d="M11 12.300V5M7.800 8l3.200-3.200L14.200 8" stroke-width="1.600"/></svg>
<div class="abs" style="left:1734px;top:443px;width:129.700px;height:28.500px;background:#0e72ed;border-radius:7px"></div><span class="t" style="letter-spacing:-0.052px;top:450.06px;left:1743.500px;font-size:16px;font-weight:bold;color:#fff">Ask to unmute</span>
<div class="abs" style="left:1514px;top:962.500px;width:66.5px;height:28px;border:1px solid #6b6b6b;border-radius:7px"></div><span class="t" style="letter-spacing:-0.050px;top:968.16px;left:1528px;font-size:16px;color:#f2f2f2">Invite</span>
<div class="abs" style="left:1652px;top:962.500px;width:84.5px;height:28px;border:1px solid #6b6b6b;border-radius:7px"></div><span class="t" style="letter-spacing:-0.147px;top:968.16px;left:1666.5px;font-size:16px;color:#f2f2f2">Mute all</span>
<div class="abs" style="left:1808.5px;top:962.500px;width:28.0px;height:28px;border:1px solid #6b6b6b;border-radius:7px"></div><svg class="abs" style="left:1812px;top:970px" width="22" height="12" viewBox="0 0 22 12" fill="#f2f2f2"><circle cx="6.500" cy="6.500" r="1.150"/><circle cx="10.500" cy="6.500" r="1.150"/><circle cx="14.500" cy="6.500" r="1.150"/></svg>
</div>

<!-- TASKBAR -->
<div id="tb">
<div class="abs" style="left:0;top:0;width:1920px;height:1px;background:#aebfca"></div>
<div class="abs" style="left:0;top:-1px;width:1920px;height:1px;background:#f4f6f7"></div>
<svg class="abs" style="left:0;top:0" width="1920" height="60" viewBox="0 1020 1920 60">
<defs>
<linearGradient id="sun" x1=".2" y1="0" x2=".7" y2="1"><stop offset="0" stop-color="#f9b62b"/><stop offset="1" stop-color="#f27a1a"/></linearGradient>
<linearGradient id="win" x1="0" y1="0" x2="1" y2="1"><stop offset="0" stop-color="#35b3f7"/><stop offset="1" stop-color="#0a6fd0"/></linearGradient>
<linearGradient id="edge" x1="0" y1="0" x2=".6" y2="1"><stop offset="0" stop-color="#35c1e8"/><stop offset=".5" stop-color="#1b8fdd"/><stop offset="1" stop-color="#1565c0"/></linearGradient>
<linearGradient id="edge2" x1="0" y1="0" x2="1" y2=".6"><stop offset="0" stop-color="#36c6e4"/><stop offset=".6" stop-color="#3fd09a"/><stop offset="1" stop-color="#6fe060"/></linearGradient>
<linearGradient id="word" x1="0" y1="0" x2="0" y2="1"><stop offset="0" stop-color="#7cc0f5"/><stop offset=".5" stop-color="#2f7de0"/><stop offset="1" stop-color="#103f91"/></linearGradient>
<linearGradient id="fold" x1="0" y1="0" x2="0" y2="1"><stop offset="0" stop-color="#ffd866"/><stop offset="1" stop-color="#f3b22a"/></linearGradient>
</defs>
<!-- weather -->
<circle cx="40" cy="1049" r="12.300" fill="url(#sun)"/><path d="M42 1056.500c-2.600 0-4.200-1.600-4.200-3.600 0-1.900 1.500-3.400 3.500-3.500.8-2 2.600-3.200 4.800-3.200 2.500 0 4.500 1.600 5 3.900 2.200.1 3.800 1.500 3.800 3.300 0 1.800-1.500 3.100-3.600 3.100z" fill="#e6eef8" stroke="#b9cde6" stroke-width=".6"/><path d="M39 1055c2 1 12 1 14.500 0" stroke="#9fb9e0" stroke-width="1" fill="none" opacity=".8"/>
<!-- windows -->
<path d="M585 1036h13.700v13.700H585zM600.300 1036H614v13.700h-13.700zM585 1051.300h13.700V1065H585zM600.300 1051.300H614V1065h-13.700z" fill="url(#win)"/>
<!-- search -->
<rect x="631.500" y="1031" width="273.500" height="38" rx="19" fill="#eff4f9" stroke="#bfc9d2" stroke-width="1"/>
<circle cx="653.500" cy="1049" r="6.600" fill="none" stroke="#222" stroke-width="1.900"/><path d="M658.300 1054l4.700 4.700" stroke="#222" stroke-width="2.200" stroke-linecap="round"/>
<g><path d="M842 1058c4-10 10-16 16-14 5-6 12-8 18-3 6-4 13-2 17 4 3 3 5 8 5 13z" fill="#9aa6cf" opacity=".75"/><ellipse cx="869" cy="1062" rx="29" ry="3.600" fill="#5fb0ac"/>
<path d="M850 1038l3.500 7h-2l3 6h-2l3 6h-11l3-6h-2l3-6h-2zM863 1036l4 7.500h-2.300l3.500 6.500h-2.200l3 7h-12l3-7h-2.200l3.500-6.500H859zM878 1034l4.500 8h-2.500l4 7h-2.500l3.500 8h-14l3.500-8H872l4-7h-2.500zM890 1039l3.500 7h-2l3 6h-2l3 5h-11l3-5h-2l3-6h-2z" fill="#1e6248"/><path d="M856.500 1042l3 6h-1.800l2.800 5.500h-8l2.800-5.500h-1.800zM871 1040l3.500 7h-2l3 6.500h-9l3-6.500h-2zM884.500 1043l3 6h-1.800l2.800 5h-8l2.800-5h-1.800z" fill="#2f8a62"/>
<path d="M841 1059c2-4 6-5 9-3 2-3 7-3 9 0 3-3 8-3 10 0 3-3 8-3 10 0 3-3 8-2 10 1 3-2 7-1 8 2-8 3-48 3-56 0z" fill="#d3a83a"/><path d="M846 1060.500c8 2 38 2 46 0" stroke="#b98a2a" stroke-width="1" fill="none"/></g>
<!-- task view -->
<rect x="930" y="1036.500" width="19.500" height="19.500" rx="3" fill="#f4f6f8" stroke="#d5dbe0" stroke-width=".6"/><rect x="921.500" y="1044.500" width="20" height="19.500" rx="3" fill="#1d1d1f"/><path d="M930 1044.500h11.500v11.500" fill="none" stroke="#8a8d90" stroke-width=".8"/>
<!-- explorer -->
<path d="M977.500 1038h9l3 3.500h15c1 0 1.500.5 1.500 1.500v18c0 1-.5 1.500-1.500 1.500h-27c-1 0-1.500-.5-1.500-1.500v-21.500c0-1 .5-1.500 1.500-1.500z" fill="#f0a822"/><path d="M976 1045.500h30v15.500c0 1-.5 1.500-1.500 1.500h-27c-1 0-1.500-.5-1.500-1.500z" fill="url(#fold)"/><rect x="981" y="1056" width="20" height="8" rx="1.500" fill="#2a88e0"/><rect x="986" y="1058.500" width="10" height="2.600" rx="1" fill="#bfe0fb"/>
<!-- edge -->
<circle cx="1046" cy="1050" r="15" fill="url(#edge)"/>
<path d="M1036 1039c6-5 16-4.500 21.500 1.500 4 4.500 4.500 10 1.500 13.500-2.500 2.800-7 3.500-9 1.500-1.500-1.500-.5-3 .5-4.500 1.500-2.500.5-6-3-8-4-2.200-9-1.500-13 1.500.5-2 .8-3.800 1.500-5.500z" fill="url(#edge2)"/>
<path d="M1031.200 1052.500c1-6 6-10 12.500-10 4 0 7 1.500 8 4-1.500-1-3.500-1.300-5.500-1-4 .8-6.500 4-6 8 .6 5 5 8.500 10.500 8.500 3 0 6-1 8-3-2.500 4-7.500 6-12.500 6-8.500 0-15.500-5.500-15-12.500z" fill="#0c4f9e" fill-opacity=".9"/>
<!-- store -->
<path d="M1093.500 1042v-3c0-2 1.500-3.500 3.500-3.500h6c2 0 3.500 1.500 3.500 3.500v3" fill="none" stroke="#35b2ec" stroke-width="2"/><rect x="1085" y="1041.500" width="30" height="23.500" rx="3.500" fill="#14509a"/><path d="M1085 1044.500c0-1.700 1.300-3 3-3h24c1.700 0 3 1.300 3 3v3h-30z" fill="#1b66b8"/><rect x="1093.500" y="1046.500" width="5.800" height="5.800" fill="#f25022"/><rect x="1100.700" y="1046.500" width="5.800" height="5.800" fill="#7fba00"/><rect x="1093.500" y="1053.700" width="5.800" height="5.800" fill="#00a4ef"/><rect x="1100.700" y="1053.700" width="5.800" height="5.800" fill="#ffb900"/>
<!-- chrome x2 -->
<g id="chr" transform="translate(1140.500 1035.500) scale(0.60417)"><circle cx="24" cy="24" r="23.500" fill="#fff"/><path d="M24 12H44.785a23.994 23.994 0 0 0-41.569.003L13.608 30l.009-.002A11.985 11.985 0 0 1 24 12z" fill="#ea4335"/><path d="M34.391 30.003L24.001 48A23.994 23.994 0 0 0 44.780 12.003H23.999l-.003.009A11.985 11.985 0 0 1 34.391 30.003z" fill="#fbbc04"/><path d="M13.609 30.003L3.218 12.006A23.994 23.994 0 0 0 24.003 48L34.393 30.003l-.007-.007a11.985 11.985 0 0 1-20.778.007z" fill="#34a853"/><circle cx="24" cy="24" r="12" fill="#fff"/><circle cx="24" cy="24" r="9.500" fill="#4285f4"/></g>
<use href="#chr" x="55"/>
<circle cx="1222" cy="1039" r="8.300" fill="#5a3a1e"/><circle cx="1222" cy="1037" r="3" fill="#e0b898"/><path d="M1216.500 1045c.5-3.500 2.500-5 5.500-5s5 1.500 5.500 5a8.300 8.300 0 0 1-11 0z" fill="#8a9a3a"/><path d="M1219 1036c0-3 1.500-4 3-4s3 1 3 4c-1.500-1.500-4.500-1.500-6 0z" fill="#c99058"/>
<!-- zoom -->
<rect x="1251" y="1035" width="30" height="30" rx="12" fill="#0b5cff"/>
<circle cx="1280" cy="1041.500" r="4.700" fill="#f0443e"/>
<!-- word -->
<rect x="1311" y="1036" width="21.500" height="28" rx="3.500" fill="url(#word)"/><rect x="1305" y="1046.500" width="14" height="14" rx="2.500" fill="#1a4fb0"/>
<!-- running indicators -->
<rect x="1207" y="1071" width="8" height="3" rx="1.500" fill="#7b858e"/><rect x="1262" y="1071" width="8" height="3" rx="1.500" fill="#7b858e"/><rect x="1317" y="1071" width="8" height="3" rx="1.500" fill="#7b858e"/>
<!-- tray -->
<path d="M1588 1053l6-6 6 6" fill="none" stroke="#1a1a1a" stroke-width="1.600"/>
<rect x="1623.600" y="1040.500" width="5" height="9.800" rx="2.500" fill="none" stroke="#1f55b8" stroke-width="1.300"/><path d="M1621.200 1047.500c0 3.200 2 5.200 4.900 5.200s4.900-2 4.900-5.200M1626.100 1052.700v3" fill="none" stroke="#1f55b8" stroke-width="1.300"/>
<path d="M1647 1046.500l-11 4.500 5 1.500 1.500 5z" fill="none" stroke="#1f55b8" stroke-width="1.300" stroke-linejoin="round"/>
<path d="M1719.500 1046.500c5.500-5 13.500-5 19 0M1722.500 1050c4-3.600 9-3.600 13 0M1725.500 1053.300c2.200-2 4.800-2 7 0" fill="none" stroke="#1a1a1a" stroke-width="1.500" stroke-linecap="round"/><circle cx="1729" cy="1056.600" r="1.400" fill="#1a1a1a"/>
<path d="M1749.500 1047.500h3l4-3.500v12.500l-4-3.500h-3z" fill="none" stroke="#1a1a1a" stroke-width="1.300" stroke-linejoin="round"/><path d="M1759.500 1047c1.500 1.600 1.500 5 0 6.600M1762.300 1044.800c2.800 2.800 2.800 8.200 0 11M1765 1042.500c4 4 4 11.500 0 15.500" fill="none" stroke="#1a1a1a" stroke-width="1.200" stroke-linecap="round"/>
<rect x="1778.500" y="1044.500" width="23" height="11.500" rx="3" fill="none" stroke="#1a1a1a" stroke-width="1.300"/><rect x="1780.500" y="1046.500" width="19" height="7.500" rx="1.500" fill="#1f8d2c"/><path d="M1803 1048v4.500" stroke="#1a1a1a" stroke-width="1.600" stroke-linecap="round"/><path d="M1792 1040.500l-4.500 6.500h3.300l-1 5 4.700-6.500h-3.300z" fill="#1a1a1a" stroke="#d6e4ee" stroke-width=".8"/>
</svg>
<span class="t" style="letter-spacing:-0.969px;top:11.93px;left:64px;font-size:14.500px;color:#1a1a1a">16°C</span>
<span class="t" style="letter-spacing:0.398px;top:31.93px;left:64px;font-size:14.500px;color:#4a4a4a">Mostly sunny</span>
<span class="t" style="letter-spacing:0.562px;top:21.91px;left:677.500px;font-size:17px;color:#4a4a4a">Пошук</span>
<span class="t" style="letter-spacing:0.740px;top:26.37px;left:1255.800px;font-size:7px;font-weight:bold;color:#fff">zoom</span>
<span class="t" style="top:28.41px;left:1306.800px;font-size:10.500px;font-weight:bold;color:#fff">W</span>
<span class="t" style="letter-spacing:-0.695px;top:24.35px;left:1670px;font-size:14px;color:#1a1a1a">УКР</span>
<span class="t" style="letter-spacing:-0.324px;top:11.93px;left:1860px;font-size:14.500px;color:#1a1a1a">16:23</span>
<span class="t" style="letter-spacing:-0.398px;top:31.93px;left:1826px;font-size:14.500px;color:#1a1a1a">15.04.2026</span>
</div>
</body>
</html>
